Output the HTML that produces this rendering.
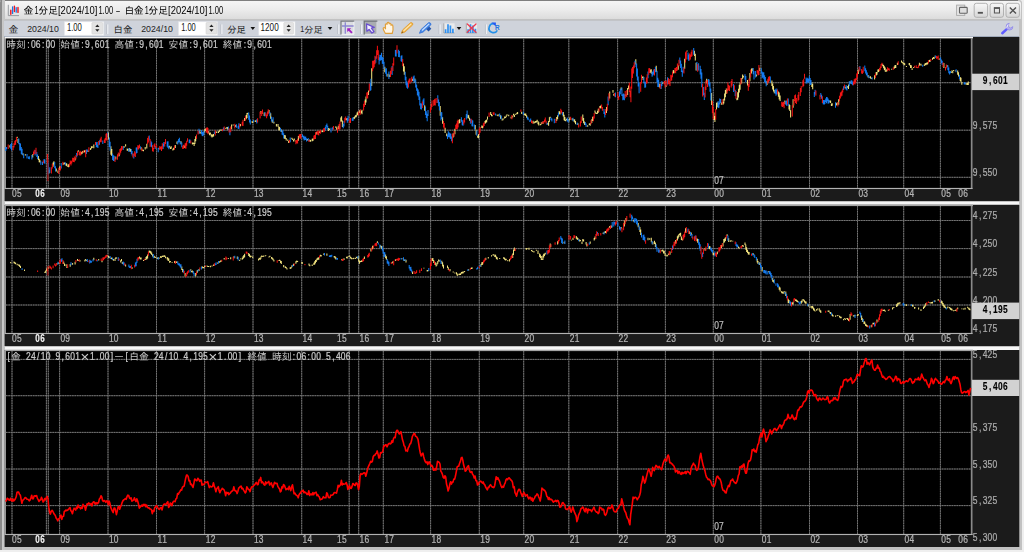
<!DOCTYPE html>
<html lang="ja"><head><meta charset="utf-8"><title>金1分足[2024/10]1.00 - 白金1分足[2024/10]1.00</title>
<style>
html,body{margin:0;padding:0}
body{width:1024px;height:552px;overflow:hidden;position:relative;background:#efefef;font-family:"Liberation Sans","IPAGothic",sans-serif}
svg text{font-family:"Liberation Sans","IPAGothic",sans-serif;white-space:pre}
svg text.j{font-family:"Liberation Mono","IPAGothic",monospace}
svg text.u{font-family:"Liberation Sans","IPAGothic",sans-serif}
#win{position:absolute;left:0;top:0;width:1022.4px;height:549.6px;background:#c2c2c2;border-radius:3px 3px 0 0}
#frameL{position:absolute;left:0;top:0;width:4.6px;height:549.7px;background:linear-gradient(to right,#8a8a8a 0,#8a8a8a 1.8px,#c9c9c9 1.8px,#c4c4c4 100%);border-radius:3px 0 0 0}
#titlebar{position:absolute;left:1.8px;top:1.3px;width:1019.4px;height:18.2px;background:linear-gradient(to bottom,#f5f5f5,#ebebeb 50%,#dcdcdc);border-radius:2px 3px 0 0}
#topedge{position:absolute;left:0;top:0;width:1018.2px;height:1.3px;background:#7e7e7e;border-radius:2px 0 0 0}
#toolbar{position:absolute;left:4.2px;top:19.5px;width:1015.1px;height:17.4px;background:#cfd3db;border-top:0.9px solid #c2c4c8;border-bottom:1px solid #9fa9b9;box-sizing:border-box}
.sepw{position:absolute;left:4.6px;width:1014.7px;background:#f6f6f6}
</style></head><body>
<div id="win"></div>
<div id="topedge"></div>
<div id="titlebar"></div>
<div id="frameL"></div>
<div id="toolbar"></div>
<div class="sepw" style="top:201.9px;height:2.6px"></div>
<div class="sepw" style="top:346.9px;height:2.7px"></div>
<svg width="1024" height="552" viewBox="0 0 1024 552" style="position:absolute;left:0;top:0">
<defs><linearGradient id="bg1" x1="0" y1="0" x2="0" y2="1"><stop offset="0" stop-color="#f8f8f8"/><stop offset="1" stop-color="#d6d6d6"/></linearGradient><filter id="bl" x="-2%" y="-2%" width="104%" height="104%"><feGaussianBlur stdDeviation="0.32"/></filter><filter id="bt" x="-2%" y="-10%" width="104%" height="120%"><feGaussianBlur stdDeviation="0.28"/></filter></defs>
<rect x="4.6" y="37" width="1014.6999999999999" height="164" fill="#1b1b1b"/>
<rect x="4.6" y="38" width="1.3000000000000007" height="150.5" fill="#b6b6b6"/>
<rect x="5.9" y="38" width="965.1" height="150.5" fill="#000"/>
<rect x="4.6" y="36.8" width="968.4" height="1.6" fill="#f4f4f4"/>
<g filter="url(#bl)"><path d="M12 38V188.5M46.4 38V188.5M48.3 38V188.5M59.6 38V188.5M108 38V188.5M156.5 38V188.5M204.6 38V188.5M253 38V188.5M301.7 38V188.5M349.2 38V188.5M358.7 38V188.5M383.3 38V188.5M430.6 38V188.5M479.3 38V188.5M523.7 38V188.5M568.8 38V188.5M617.6 38V188.5M665.4 38V188.5M713.3 38V188.5M760.9 38V188.5M809.5 38V188.5M857.5 38V188.5M903.7 38V188.5M940.4 38V188.5M5.9 82.7H971.0M5.9 130.2H971.0M5.9 177.3H971.0" stroke="#393939" stroke-width="0.95" fill="none"/><path d="M12 38V188.5M46.4 38V188.5M48.3 38V188.5M59.6 38V188.5M108 38V188.5M156.5 38V188.5M204.6 38V188.5M253 38V188.5M301.7 38V188.5M349.2 38V188.5M358.7 38V188.5M383.3 38V188.5M430.6 38V188.5M479.3 38V188.5M523.7 38V188.5M568.8 38V188.5M617.6 38V188.5M665.4 38V188.5M713.3 38V188.5M760.9 38V188.5M809.5 38V188.5M857.5 38V188.5M903.7 38V188.5M940.4 38V188.5M5.9 82.7H971.0M5.9 130.2H971.0M5.9 177.3H971.0" stroke="#787878" stroke-width="0.95" stroke-dasharray="1.63 0.82" fill="none"/></g>
<rect x="970.8" y="38" width="1.7" height="151.0" fill="#8a8a8a"/>
<rect x="4.6" y="187.9" width="967.9" height="1.15" fill="#b2b2b2"/>
<g fill="none" stroke-width="1.05" filter="url(#bl)">
<path d="M9.9 145.3V147.4M17.2 136.8V138.0M18.0 138.7V143.1M22.9 153.3V155.2M25.4 154.2V155.4M32.7 154.2V157.4M38.4 156.0V159.9M39.2 158.7V162.3M40.0 160.3V162.5M49.0 169.8V173.5M53.1 162.5V166.7M53.9 161.2V164.5M56.3 168.5V171.6M58.0 170.4V172.9M59.6 166.5V170.0M63.7 162.7V164.7M64.5 162.6V164.2M66.1 163.0V165.7M66.9 163.7V166.3M67.7 165.8V166.8M68.6 164.3V167.2M75.1 157.5V160.5M78.3 150.2V151.8M81.6 151.9V154.3M82.4 150.9V153.6M84.0 150.8V152.6M84.9 149.9V152.3M88.1 150.4V152.1M90.6 148.0V150.0M91.4 146.3V148.4M92.2 146.3V147.9M93.8 144.5V148.2M108.5 132.5V139.6M110.9 146.3V154.7M111.8 149.1V155.9M115.8 156.6V159.6M119.1 153.2V156.3M124.0 145.9V148.1M125.6 144.2V146.6M127.2 148.4V150.7M128.1 148.9V150.8M129.7 148.1V151.5M130.5 149.0V151.7M141.1 147.2V149.8M142.7 149.5V151.0M143.5 149.7V151.2M145.2 146.9V149.6M146.8 143.7V148.4M159.0 147.8V149.0M169.6 145.8V147.5M170.4 147.3V149.0M171.2 146.2V148.7M172.9 148.8V150.6M173.7 147.7V149.8M175.3 145.1V148.0M177.0 141.5V144.1M181.0 141.3V144.3M184.3 145.5V148.1M192.4 142.5V144.4M193.3 142.6V144.0M194.1 143.0V145.9M194.9 138.9V144.0M195.7 136.3V141.2M199.8 130.2V133.6M200.6 132.3V133.6M204.7 129.3V132.5M205.5 128.6V131.0M208.7 130.9V133.4M209.6 132.7V135.2M210.4 132.5V134.6M211.2 134.1V136.6M212.0 134.9V137.5M212.8 134.2V136.8M213.6 134.0V136.5M216.1 131.5V133.1M216.9 131.6V132.8M218.5 131.2V132.9M219.3 129.8V132.1M221.0 129.3V130.9M225.9 127.8V128.9M226.7 127.3V128.3M227.5 127.1V129.4M231.6 124.4V129.2M233.2 124.4V125.5M235.6 125.1V127.1M240.5 124.0V126.2M244.6 118.1V120.9M246.2 115.1V119.3M247.0 113.1V118.1M247.9 112.7V114.2M251.9 121.5V122.6M252.7 121.2V123.0M255.2 120.5V121.7M256.0 120.3V121.9M260.9 111.0V114.1M264.2 112.6V116.0M269.0 109.9V113.3M270.7 113.3V118.8M272.3 119.5V122.7M273.9 121.8V123.5M276.4 124.1V126.6M278.0 123.9V126.7M278.8 126.4V130.3M279.6 127.1V130.6M281.3 129.6V132.1M284.5 135.1V138.7M285.3 135.3V138.8M286.2 137.9V140.5M287.8 139.5V141.1M288.6 141.0V143.1M291.9 137.8V139.2M292.7 138.8V140.1M293.5 139.7V141.5M294.3 138.6V140.2M295.1 140.4V141.6M298.4 136.1V140.7M307.4 139.0V140.5M309.8 139.4V141.5M310.6 139.9V141.7M312.2 138.8V141.3M313.1 138.3V140.8M316.3 132.1V134.5M319.6 131.3V132.9M322.0 130.4V132.2M322.8 130.4V131.9M328.5 127.9V131.0M329.4 128.4V129.9M335.9 126.2V128.0M336.7 127.6V129.8M338.3 125.7V129.0M340.8 117.4V121.8M341.6 116.2V121.6M342.4 120.6V127.0M346.5 118.3V120.3M353.8 116.9V119.2M354.6 116.5V118.8M355.4 115.3V117.4M356.3 114.7V117.2M357.1 112.6V115.6M357.9 111.4V114.9M359.5 110.2V112.9M361.1 110.8V113.2M362.0 109.7V114.3M365.2 99.5V105.1M366.0 96.4V102.4M368.5 90.4V95.0M371.7 68.3V85.9M384.8 66.7V72.2M388.0 73.8V76.7M389.7 74.5V77.0M403.5 63.5V71.6M404.3 66.2V74.7M412.5 78.8V81.0M414.9 78.5V82.9M424.7 105.2V110.7M440.2 105.9V115.8M442.6 117.2V123.8M445.1 127.7V133.0M446.7 133.6V136.3M453.2 133.2V137.4M454.9 128.8V134.2M458.9 120.0V123.8M459.8 119.1V122.9M467.9 114.7V118.3M468.7 115.2V118.6M469.5 117.7V120.8M475.2 125.0V129.5M476.1 129.7V134.8M477.7 135.6V137.7M478.5 133.9V138.3M481.8 125.5V128.0M482.6 125.7V128.3M485.0 120.9V124.1M485.8 119.9V123.0M486.7 119.4V122.3M487.5 116.5V119.6M490.7 112.0V115.0M491.5 114.0V116.3M492.4 115.2V116.2M497.2 114.5V115.8M498.1 115.2V116.3M498.9 114.2V115.3M500.5 115.2V118.8M502.1 119.6V120.6M503.0 118.2V120.3M504.6 116.5V118.6M505.4 116.7V118.1M506.2 115.5V117.2M507.0 114.2V115.8M508.7 114.8V116.3M511.1 116.8V118.6M512.7 115.8V117.4M513.5 113.8V115.6M514.4 115.1V117.0M515.2 113.7V115.1M516.8 112.8V114.5M517.6 112.1V114.0M521.7 111.7V113.9M524.1 113.4V115.1M525.0 113.5V115.6M525.8 113.5V116.0M526.6 115.3V117.8M533.1 120.8V122.9M533.9 122.8V123.7M534.7 121.4V123.0M535.6 121.1V122.8M536.4 120.7V122.4M537.2 119.7V121.5M538.0 120.9V124.2M538.8 122.3V125.5M540.4 124.1V125.2M541.3 122.2V124.5M542.9 121.4V123.9M547.8 123.1V124.5M548.6 121.1V125.8M549.4 117.2V122.0M550.2 116.7V117.9M556.7 117.1V120.9M557.6 115.3V119.2M559.2 111.1V114.3M560.0 111.7V114.6M563.3 112.1V116.6M564.1 114.7V120.3M564.9 117.1V120.9M565.7 119.7V121.3M566.5 118.7V120.2M569.0 119.1V121.4M569.8 117.4V119.8M572.2 118.2V120.2M573.9 119.1V121.4M574.7 119.4V122.4M575.5 121.0V124.2M577.9 123.3V125.1M582.8 114.6V120.8M583.6 118.1V123.3M584.5 121.6V124.9M587.7 125.2V126.8M589.3 123.4V125.1M590.2 123.0V125.8M591.8 119.3V122.9M592.6 116.8V120.9M595.0 110.4V112.7M595.9 112.3V114.1M596.7 112.9V114.0M597.5 110.8V113.8M598.3 108.8V112.7M599.9 105.9V107.9M600.8 105.5V108.6M606.5 107.1V113.1M609.7 91.4V98.4M613.0 90.0V92.8M613.8 93.7V95.8M621.1 87.5V90.2M626.0 94.3V96.2M627.6 87.9V95.1M628.5 85.5V89.3M635.8 59.3V64.5M642.3 76.5V77.9M643.1 76.4V79.9M650.5 69.6V72.8M651.3 69.3V73.8M656.2 65.8V72.0M659.4 83.8V87.6M662.7 82.2V84.0M666.0 85.3V87.0M673.3 69.9V73.4M674.1 70.4V73.2M678.2 65.2V69.7M684.7 58.8V68.8M687.1 50.5V51.6M694.5 50.7V56.1M695.3 53.8V60.6M696.1 62.8V70.5M706.7 78.8V83.6M711.6 92.9V104.9M714.0 112.4V120.1M714.9 116.1V122.0M716.5 102.8V109.4M717.3 102.3V107.1M721.4 102.5V104.8M723.0 102.0V104.7M723.8 98.8V103.5M724.6 93.4V100.6M725.4 90.1V97.2M726.3 88.4V93.8M736.9 97.9V100.2M737.7 92.2V99.8M738.5 88.8V97.5M739.3 84.7V92.5M740.1 82.7V89.8M741.7 77.9V83.5M742.6 74.6V78.7M743.4 75.8V77.5M747.5 80.0V85.6M749.9 73.0V81.2M751.5 68.5V73.5M752.3 68.2V71.3M756.4 74.5V76.6M759.7 67.8V70.9M767.0 80.8V85.0M771.9 80.5V86.1M772.7 83.4V89.6M773.5 86.1V91.6M774.3 90.1V93.3M778.4 91.4V96.7M779.2 92.5V99.5M780.1 95.5V101.0M784.9 100.5V103.9M789.0 104.0V109.5M789.8 104.9V111.1M790.6 110.3V117.5M793.1 99.2V107.7M811.8 82.6V87.0M812.7 83.8V89.3M829.8 100.5V102.3M830.6 100.6V103.0M831.4 103.4V105.9M832.2 103.2V105.7M836.3 103.3V105.5M837.1 102.6V104.8M838.7 99.3V104.8M845.3 86.8V88.5M847.7 86.1V87.9M848.5 84.5V89.0M850.1 81.5V83.6M858.3 69.4V74.0M868.1 75.1V77.5M869.7 76.7V77.7M870.5 76.3V78.4M871.3 77.7V79.0M874.6 75.3V79.5M876.2 72.1V75.6M877.0 72.1V74.8M877.9 69.6V72.3M878.7 69.3V72.1M882.7 63.8V66.3M883.6 65.1V68.2M884.4 66.3V70.1M885.2 67.4V71.6M886.0 70.4V71.9M886.8 69.3V71.3M891.7 68.7V69.7M894.2 66.4V68.7M895.0 65.1V68.1M895.8 65.0V68.0M897.4 62.7V65.0M901.5 60.5V62.4M902.3 61.8V63.0M903.1 62.4V64.2M903.9 62.7V64.7M904.7 63.2V65.2M906.4 66.0V66.9M908.8 63.6V64.4M909.6 62.9V65.5M910.5 64.9V67.9M911.3 65.3V68.1M912.1 68.3V70.0M913.7 67.0V68.0M917.0 67.1V67.9M919.4 62.8V65.7M920.2 63.7V64.6M921.0 63.7V65.7M924.3 64.4V66.1M925.1 63.2V65.3M925.9 63.1V65.2M926.8 62.4V64.5M927.6 62.3V64.4M929.2 60.0V61.7M930.0 59.7V61.9M932.5 57.9V59.8M933.3 57.0V58.7M934.1 56.9V58.9M934.9 55.8V56.6M939.8 58.5V59.8M943.9 63.0V67.9M947.1 65.1V67.0M951.2 71.9V73.0M952.0 70.3V72.3M952.8 71.2V73.2M953.6 69.9V71.1M955.3 70.5V71.3M957.7 70.6V74.8M958.5 72.2V76.6M960.2 76.9V81.1M961.0 77.7V81.9M961.8 81.9V84.7M965.9 83.0V84.5M966.7 83.6V84.8M967.5 83.1V85.1M968.3 81.6V84.9" stroke="#efe07c"/>
<path d="M5.8 147.2V151.1M6.6 147.0V149.3M10.7 144.0V148.8M11.5 142.7V150.5M18.8 138.5V144.2M19.7 142.9V150.4M20.5 143.4V150.4M21.3 147.1V153.9M22.1 148.8V154.9M23.7 153.7V158.2M27.0 154.0V158.5M28.6 156.4V159.1M29.4 156.2V159.3M31.9 154.9V159.5M35.1 150.1V155.4M36.8 152.1V156.9M37.6 154.6V158.9M40.8 161.3V164.8M42.5 161.7V165.0M44.1 159.0V163.2M44.9 159.5V163.7M48.2 162.6V174.5M49.8 167.3V172.9M54.7 162.1V168.3M55.5 166.2V171.6M61.2 162.9V168.6M65.3 162.3V165.3M76.7 153.1V157.3M86.5 149.4V153.9M87.3 149.5V152.1M96.3 142.2V147.2M97.1 142.0V147.2M97.9 144.8V148.1M99.5 140.3V144.7M102.8 140.4V144.1M107.7 132.2V137.1M109.3 137.5V146.9M110.1 141.8V150.8M112.6 153.6V160.0M113.4 155.2V161.0M114.2 155.7V160.9M123.2 146.4V149.9M128.9 147.9V151.9M131.3 148.9V154.1M132.1 151.0V155.6M133.8 153.8V158.6M136.2 147.4V153.6M137.0 147.3V153.1M140.3 146.2V149.1M149.2 135.6V140.5M150.9 140.7V146.5M151.7 142.2V147.3M155.8 145.9V148.9M158.2 148.0V152.2M163.1 143.7V149.1M163.9 142.0V146.5M167.2 141.6V146.7M168.0 141.3V148.0M168.8 145.9V149.3M177.8 140.8V144.4M178.6 139.1V142.5M179.4 137.7V142.3M180.2 141.2V144.2M181.8 142.6V147.3M189.2 139.5V143.2M190.0 139.6V143.0M199.0 128.7V133.8M201.4 130.1V134.2M202.2 131.6V136.0M203.0 132.0V136.3M203.8 130.7V135.1M214.4 131.4V134.1M223.4 127.4V130.8M228.3 126.5V130.3M229.9 129.7V135.2M236.4 124.3V127.7M238.1 125.8V128.7M238.9 123.2V129.0M248.7 112.6V119.8M249.5 115.6V122.5M250.3 119.4V124.5M253.6 120.0V122.1M256.8 119.3V123.6M265.0 111.9V116.5M269.9 111.9V116.2M271.5 116.8V121.5M273.1 117.3V122.6M280.5 128.0V131.5M282.1 129.8V134.7M282.9 130.8V135.2M283.7 133.2V138.5M290.2 137.5V142.2M302.5 134.3V137.0M303.3 135.8V138.7M304.1 135.8V140.5M304.9 137.0V140.1M305.7 136.4V140.1M306.5 138.2V141.4M308.2 137.9V141.1M325.3 126.7V130.6M326.1 125.0V128.8M326.9 123.5V126.7M327.7 125.7V130.1M331.0 127.8V132.6M332.6 127.2V129.8M343.2 123.9V128.2M344.0 121.1V126.6M347.3 118.0V122.7M348.1 115.7V120.9M352.2 118.2V120.7M353.0 117.2V120.9M370.1 82.7V90.9M370.9 78.7V90.3M375.8 56.4V62.7M379.1 57.3V64.4M379.9 54.8V60.8M380.7 55.1V60.4M381.5 52.7V60.0M382.3 56.9V63.8M383.1 57.4V64.3M384.0 61.8V68.8M385.6 68.4V73.7M386.4 68.3V76.4M388.9 71.6V79.0M392.1 66.1V74.9M395.4 50.1V56.5M396.2 49.8V56.4M398.6 49.7V56.9M399.4 51.1V57.3M401.1 55.7V61.3M401.9 55.2V62.1M405.2 71.7V80.2M406.0 76.7V85.2M406.8 81.3V87.8M407.6 82.7V88.7M413.3 76.4V81.0M414.1 75.5V82.7M415.7 79.6V87.4M416.6 84.4V90.7M417.4 88.3V95.3M418.2 89.5V96.4M419.0 91.8V99.9M419.8 96.4V105.6M420.6 103.2V109.3M421.5 103.5V109.6M423.1 99.4V105.6M423.9 98.2V105.1M425.5 106.6V115.0M426.3 111.3V118.0M427.2 113.8V121.3M428.0 110.0V116.0M437.8 95.3V103.1M438.6 99.6V106.2M439.4 102.1V110.4M441.0 112.1V120.4M441.8 112.3V119.1M447.5 134.5V139.0M448.3 131.3V137.3M449.2 132.5V136.9M450.0 133.3V138.6M450.8 133.7V139.0M451.6 136.4V141.2M461.4 117.2V121.7M462.2 120.1V125.3M463.0 121.4V125.8M466.3 114.1V119.4M467.1 110.5V117.8M470.4 118.8V123.8M472.0 119.7V126.3M472.8 120.5V126.5M474.4 124.5V129.6M476.9 130.4V135.7M495.6 113.4V115.5M499.7 113.5V116.8M501.3 115.5V119.4M523.3 111.7V114.7M527.4 116.5V119.5M528.2 117.6V120.3M529.8 119.6V122.1M530.7 118.5V121.5M547.0 122.4V124.9M551.0 117.4V120.3M551.9 118.5V121.6M554.3 118.7V123.2M558.4 112.6V116.5M562.4 112.0V115.2M567.3 117.5V121.4M568.2 119.0V122.4M573.0 117.8V121.3M577.1 122.5V125.0M585.3 122.0V124.9M586.1 123.5V127.1M604.0 109.1V113.9M604.8 111.8V117.6M608.1 96.6V105.3M615.4 92.4V97.3M619.5 91.3V96.7M620.3 88.9V94.2M621.9 87.5V96.0M622.8 94.3V100.3M623.6 93.5V99.8M624.4 94.3V100.3M635.0 60.8V67.1M636.6 63.4V76.5M637.4 68.6V80.4M638.2 76.5V86.4M639.1 82.9V93.3M643.9 77.0V83.3M644.8 81.7V87.7M645.6 81.7V87.5M648.0 71.6V78.2M652.1 71.7V76.8M652.9 71.6V75.5M653.7 69.6V74.6M655.4 66.9V72.3M657.0 70.8V82.2M657.8 77.7V86.9M658.6 79.8V86.9M661.1 83.8V89.1M661.9 81.1V86.0M667.6 77.2V84.4M679.8 57.6V63.5M680.6 60.6V68.1M681.4 63.8V71.9M682.3 70.5V76.7M683.1 66.7V72.5M688.0 52.5V59.4M688.8 54.5V61.0M693.7 48.1V54.7M696.9 61.9V70.4M698.6 63.3V70.5M700.2 65.8V74.6M701.0 68.9V78.7M701.8 72.4V87.3M703.4 87.0V95.2M704.3 92.7V100.0M708.3 79.1V84.5M709.1 79.5V86.4M710.0 82.4V91.7M710.8 88.6V100.4M718.1 101.1V108.1M718.9 102.5V107.7M719.7 98.4V104.6M720.6 99.1V102.9M733.6 84.0V91.9M735.2 89.7V96.0M745.0 74.3V79.7M745.8 76.0V82.3M753.2 67.9V74.3M754.0 71.1V79.4M755.6 71.1V77.5M761.3 68.3V73.5M762.1 71.6V78.2M762.9 72.3V77.4M763.8 72.3V79.2M764.6 75.2V82.0M765.4 76.9V83.3M766.2 81.5V86.3M770.3 76.4V82.7M775.2 88.8V93.8M776.0 90.0V95.7M776.8 88.5V94.5M785.8 101.1V104.8M786.6 100.5V105.7M788.2 98.6V106.1M806.1 77.6V83.4M806.9 78.6V83.4M807.8 77.8V81.9M808.6 78.8V83.0M809.4 75.8V81.3M810.2 78.1V85.0M811.0 80.1V84.7M814.3 91.9V97.0M815.1 89.7V94.6M820.8 93.1V96.9M821.6 94.8V98.8M823.2 100.1V104.2M824.1 99.9V104.7M824.9 100.3V103.9M825.7 98.4V102.0M826.5 97.0V103.2M827.3 97.3V101.3M828.1 98.4V103.8M829.0 100.0V103.2M835.5 102.2V107.7M843.6 86.2V90.1M846.1 84.9V89.8M846.9 86.6V90.5M849.3 81.3V86.3M851.0 80.6V84.0M851.8 80.2V84.2M852.6 81.4V85.2M859.9 66.0V70.4M864.8 65.6V71.2M865.6 68.3V73.5M866.4 70.2V75.2M867.3 72.6V76.6M868.9 75.5V78.2M872.1 77.3V79.6M922.7 64.7V66.8M935.7 55.4V58.0M940.6 57.3V60.1M941.4 59.5V63.2M942.2 60.7V64.9M947.9 65.3V70.3M948.8 67.6V73.2M949.6 71.3V74.5M950.4 71.0V73.3M956.1 69.3V72.3M959.4 74.8V79.2M964.2 82.3V84.6M965.1 82.3V84.6" stroke="#1279ec"/>
<path d="M8.2 144.6V149.0M13.1 145.9V150.2M14.0 143.3V147.6M14.8 140.8V145.1M15.6 139.9V144.8M16.4 136.9V141.5M33.5 151.4V154.9M34.3 149.7V154.1M36.0 147.7V154.3M43.3 160.4V163.2M47.4 153.9V163.2M51.4 167.2V173.5M52.3 163.8V168.4M58.8 167.8V174.1M60.4 166.1V170.5M62.9 161.8V165.3M69.4 163.5V167.0M70.2 160.6V164.1M71.0 161.2V165.4M71.8 160.5V163.6M72.6 157.7V161.6M73.4 157.9V162.0M74.3 156.5V162.3M75.9 155.2V159.4M77.5 150.9V155.7M79.2 152.0V155.1M80.0 150.8V155.7M80.8 151.4V155.3M83.2 150.6V152.9M85.7 149.7V157.3M88.9 147.2V151.8M95.5 141.9V145.1M98.7 141.1V145.3M100.3 138.5V142.3M101.2 136.7V142.2M104.4 139.6V142.9M105.2 137.9V143.1M106.0 133.7V140.0M106.9 133.1V140.8M115.0 157.2V162.0M117.5 154.3V159.7M118.3 152.6V156.4M119.9 149.1V154.7M120.7 148.2V152.8M121.5 146.0V150.7M122.3 146.2V149.6M132.9 153.2V157.4M134.6 151.3V156.3M135.4 152.5V156.9M137.8 145.3V149.4M138.6 145.5V149.4M139.5 144.6V147.9M141.9 147.8V151.3M147.6 138.0V144.2M148.4 136.2V142.6M150.1 138.9V146.9M152.5 145.3V151.2M153.3 148.0V151.8M154.1 144.3V148.9M154.9 143.2V146.9M156.6 144.9V148.0M159.8 146.0V149.9M160.7 146.7V149.3M161.5 146.2V150.9M162.3 143.3V149.3M164.7 142.1V146.5M165.5 139.1V144.0M174.5 145.4V149.7M182.7 145.8V149.1M183.5 144.7V148.7M185.1 143.2V148.3M185.9 142.8V148.7M186.7 140.8V145.7M187.5 138.3V141.8M190.8 140.5V143.6M196.5 134.4V138.9M198.1 130.8V134.4M206.3 128.1V132.6M207.1 127.1V133.1M207.9 128.0V134.3M215.3 130.2V135.6M222.6 128.9V131.2M224.2 126.5V130.1M229.1 128.2V132.5M230.7 126.4V132.2M234.8 123.7V128.5M239.7 123.8V127.5M242.2 121.7V125.8M243.0 119.8V126.0M245.4 116.0V120.7M257.6 118.3V122.5M260.1 111.7V118.5M261.7 111.0V116.1M262.5 109.5V114.0M265.8 112.8V115.8M266.6 114.5V118.2M267.4 111.5V116.3M268.2 109.2V114.2M289.4 140.1V142.7M295.9 140.2V144.3M296.8 139.9V143.2M297.6 138.8V143.4M299.2 134.4V137.8M300.0 133.9V138.8M300.8 133.9V138.7M309.0 139.8V142.1M313.9 135.6V139.8M314.7 135.0V138.9M315.5 132.3V139.0M317.1 131.1V134.3M317.9 131.4V135.1M318.8 130.6V135.4M320.4 129.8V133.7M323.7 128.2V132.2M324.5 128.0V131.8M333.4 126.0V129.7M337.5 127.5V132.7M339.1 123.9V130.3M340.0 121.6V129.3M344.8 117.7V122.8M345.7 116.4V120.3M349.7 118.4V122.9M350.5 118.0V123.1M358.7 111.5V115.6M360.3 109.3V114.7M363.6 103.8V110.6M364.4 101.1V107.0M366.8 92.4V98.4M367.7 92.1V98.5M369.3 83.6V91.6M372.6 60.7V71.3M373.4 60.9V68.6M374.2 60.1V67.3M375.0 55.7V64.2M376.6 50.2V58.8M377.4 45.7V55.0M378.3 50.3V60.1M390.5 70.7V77.1M391.3 67.5V74.1M392.9 63.3V71.0M393.7 57.6V65.4M397.0 45.2V53.4M402.7 58.9V66.3M408.4 80.5V87.6M409.2 78.7V82.5M410.0 78.3V83.7M411.7 76.7V82.1M422.3 101.4V108.1M430.4 107.3V112.4M431.2 103.8V109.7M432.0 100.4V107.1M433.7 100.1V105.7M434.5 99.3V105.2M435.3 98.5V105.5M436.9 98.0V103.0M443.5 121.0V127.4M444.3 122.9V129.2M452.4 133.8V143.2M454.1 131.0V136.8M455.7 124.8V129.8M456.5 123.4V128.9M457.3 120.8V129.2M458.1 119.6V127.5M463.8 119.5V124.6M464.6 118.1V122.5M471.2 118.8V122.9M479.3 128.6V134.8M480.1 127.0V132.7M483.4 123.3V127.4M484.2 122.3V126.1M489.1 112.6V117.1M493.2 112.3V114.8M494.0 112.2V114.9M511.9 115.1V119.2M520.9 109.6V111.7M531.5 120.3V123.0M532.3 121.4V123.7M542.1 121.7V124.0M543.7 120.9V123.4M544.5 119.6V122.3M545.3 117.6V121.4M546.1 120.8V123.4M555.9 118.7V123.0M560.8 108.7V112.5M561.6 110.2V113.4M570.6 116.8V119.9M578.7 124.5V127.5M580.4 121.3V126.6M581.2 116.4V123.1M591.0 120.3V124.3M593.4 116.2V121.3M594.2 112.9V118.4M599.1 107.8V111.8M601.6 104.4V108.2M602.4 107.0V110.8M605.6 109.1V114.9M607.3 103.7V110.8M608.9 93.3V100.8M614.6 93.1V96.4M617.9 92.1V97.9M618.7 95.9V100.0M625.2 90.9V98.2M626.8 90.0V97.0M629.3 82.7V91.9M630.1 90.8V97.3M630.9 86.5V102.3M631.7 68.5V88.8M632.5 67.1V78.1M633.4 65.5V73.5M634.2 62.2V68.2M640.7 82.1V91.8M641.5 74.7V83.4M646.4 77.6V83.7M647.2 74.2V83.3M648.8 68.3V74.8M649.7 68.0V73.1M654.5 69.0V75.5M660.2 83.8V89.0M664.3 80.8V84.5M665.1 81.1V87.6M666.8 80.2V85.9M668.4 77.9V84.2M669.2 78.9V84.3M670.0 80.8V85.9M670.8 74.7V81.0M671.7 75.3V80.6M672.5 71.6V77.2M674.9 68.1V72.7M675.7 67.8V73.3M676.5 67.1V70.9M677.4 63.5V70.4M679.0 59.8V66.3M683.9 67.4V73.6M685.5 52.3V62.6M686.3 51.0V59.4M689.6 53.5V60.3M690.4 54.4V59.6M691.2 51.8V57.0M692.0 49.7V56.2M697.7 64.2V71.7M702.6 83.7V96.4M705.1 86.6V97.5M705.9 80.4V90.1M707.5 79.9V87.0M712.4 101.1V113.2M713.2 106.7V119.3M715.7 109.1V119.7M722.2 99.2V104.2M727.1 88.5V93.4M727.9 82.4V91.1M728.7 85.1V90.1M729.5 85.7V90.9M731.2 81.1V87.4M732.0 79.0V85.8M734.4 85.2V90.9M736.0 91.0V98.8M740.9 78.1V84.5M748.3 84.1V90.7M749.1 78.4V87.0M750.7 69.4V77.2M757.2 69.9V73.6M758.0 70.7V75.6M758.9 65.1V74.9M767.8 78.8V83.8M768.6 76.7V82.2M769.5 76.3V80.8M777.6 89.4V94.2M781.7 101.8V106.6M782.5 102.6V107.0M783.3 101.8V106.4M784.1 102.0V108.2M787.4 98.5V104.5M792.3 105.2V116.4M793.9 99.9V105.5M794.7 95.2V100.9M795.5 94.6V102.9M796.4 97.9V103.9M798.0 94.8V101.6M798.8 92.1V99.9M800.4 88.0V96.1M801.2 86.0V92.2M802.9 80.2V87.3M803.7 78.8V86.1M804.5 73.8V78.7M815.9 90.6V95.7M820.0 94.7V99.6M822.4 96.2V102.9M837.9 102.1V106.4M839.5 95.7V101.2M840.4 92.6V98.6M841.2 91.7V96.5M842.0 90.6V95.8M842.8 88.4V92.5M844.4 84.5V88.2M853.4 81.5V85.3M854.2 79.2V83.8M855.0 78.5V84.5M855.8 78.3V82.6M856.7 73.6V80.1M857.5 71.2V77.6M859.1 66.7V71.4M861.6 68.9V73.5M862.4 70.5V73.9M863.2 66.8V72.7M875.4 73.5V78.1M879.5 68.0V70.9M880.3 66.6V70.3M881.1 64.0V68.1M881.9 62.8V65.3M887.6 67.2V71.3M888.4 68.2V70.1M889.3 68.4V70.7M893.3 67.3V69.7M898.2 61.2V64.7M914.5 65.8V67.4M916.2 65.2V68.1M917.8 66.7V68.3M918.6 64.8V67.8M928.4 60.3V63.6M930.8 59.1V61.1M936.5 55.9V58.8M937.3 56.5V58.4M938.2 55.5V59.9M943.1 62.6V67.1M945.5 67.0V70.6M946.3 64.6V68.3" stroke="#f01212"/>
<path d="M47.9 159V181" stroke="#b00808"/>
</g>
<g filter="url(#bt)">
<text transform="translate(12.00 196.90) scale(0.81 1)" x="0.15 6.22" y="0" font-size="10.4" fill="#b4b4b4" stroke="#b4b4b4" stroke-width="0.25">05</text>
<text transform="translate(35.16 196.90) scale(0.78 1)" x="0.26 6.57" y="0" font-size="10.4" fill="#f4f4f4" stroke="#f4f4f4" stroke-width="0.12" font-weight="bold">06</text>
<text transform="translate(60.30 196.90) scale(0.81 1)" x="0.15 6.22" y="0" font-size="10.4" fill="#b4b4b4" stroke="#b4b4b4" stroke-width="0.25">09</text>
<text transform="translate(108.80 196.90) scale(0.81 1)" x="0.15 6.22" y="0" font-size="10.4" fill="#b4b4b4" stroke="#b4b4b4" stroke-width="0.25">10</text>
<text transform="translate(157.30 196.90) scale(0.81 1)" x="0.15 6.22" y="0" font-size="10.4" fill="#b4b4b4" stroke="#b4b4b4" stroke-width="0.25">11</text>
<text transform="translate(205.60 196.90) scale(0.81 1)" x="0.15 6.22" y="0" font-size="10.4" fill="#b4b4b4" stroke="#b4b4b4" stroke-width="0.25">12</text>
<text transform="translate(253.80 196.90) scale(0.81 1)" x="0.15 6.22" y="0" font-size="10.4" fill="#b4b4b4" stroke="#b4b4b4" stroke-width="0.25">13</text>
<text transform="translate(302.50 196.90) scale(0.81 1)" x="0.15 6.22" y="0" font-size="10.4" fill="#b4b4b4" stroke="#b4b4b4" stroke-width="0.25">14</text>
<text transform="translate(336.96 196.90) scale(0.81 1)" x="0.15 6.22" y="0" font-size="10.4" fill="#b4b4b4" stroke="#b4b4b4" stroke-width="0.25">15</text>
<text transform="translate(359.50 196.90) scale(0.81 1)" x="0.15 6.22" y="0" font-size="10.4" fill="#b4b4b4" stroke="#b4b4b4" stroke-width="0.25">16</text>
<text transform="translate(384.30 196.90) scale(0.81 1)" x="0.15 6.22" y="0" font-size="10.4" fill="#b4b4b4" stroke="#b4b4b4" stroke-width="0.25">17</text>
<text transform="translate(431.50 196.90) scale(0.81 1)" x="0.15 6.22" y="0" font-size="10.4" fill="#b4b4b4" stroke="#b4b4b4" stroke-width="0.25">18</text>
<text transform="translate(480.10 196.90) scale(0.81 1)" x="0.15 6.22" y="0" font-size="10.4" fill="#b4b4b4" stroke="#b4b4b4" stroke-width="0.25">19</text>
<text transform="translate(524.50 196.90) scale(0.81 1)" x="0.15 6.22" y="0" font-size="10.4" fill="#b4b4b4" stroke="#b4b4b4" stroke-width="0.25">20</text>
<text transform="translate(569.60 196.90) scale(0.81 1)" x="0.15 6.22" y="0" font-size="10.4" fill="#b4b4b4" stroke="#b4b4b4" stroke-width="0.25">21</text>
<text transform="translate(618.40 196.90) scale(0.81 1)" x="0.15 6.22" y="0" font-size="10.4" fill="#b4b4b4" stroke="#b4b4b4" stroke-width="0.25">22</text>
<text transform="translate(666.20 196.90) scale(0.81 1)" x="0.15 6.22" y="0" font-size="10.4" fill="#b4b4b4" stroke="#b4b4b4" stroke-width="0.25">23</text>
<text transform="translate(714.10 196.90) scale(0.81 1)" x="0.15 6.22" y="0" font-size="10.4" fill="#b4b4b4" stroke="#b4b4b4" stroke-width="0.25">00</text>
<text transform="translate(761.70 196.90) scale(0.81 1)" x="0.15 6.22" y="0" font-size="10.4" fill="#b4b4b4" stroke="#b4b4b4" stroke-width="0.25">01</text>
<text transform="translate(810.30 196.90) scale(0.81 1)" x="0.15 6.22" y="0" font-size="10.4" fill="#b4b4b4" stroke="#b4b4b4" stroke-width="0.25">02</text>
<text transform="translate(858.30 196.90) scale(0.81 1)" x="0.15 6.22" y="0" font-size="10.4" fill="#b4b4b4" stroke="#b4b4b4" stroke-width="0.25">03</text>
<text transform="translate(904.50 196.90) scale(0.81 1)" x="0.15 6.22" y="0" font-size="10.4" fill="#b4b4b4" stroke="#b4b4b4" stroke-width="0.25">04</text>
<text transform="translate(941.20 196.90) scale(0.81 1)" x="0.15 6.22" y="0" font-size="10.4" fill="#b4b4b4" stroke="#b4b4b4" stroke-width="0.25">05</text>
<text transform="translate(958.16 196.90) scale(0.81 1)" x="0.15 6.22" y="0" font-size="10.4" fill="#b4b4b4" stroke="#b4b4b4" stroke-width="0.25">06</text>
<text transform="translate(714.10 184.30) scale(0.81 1)" x="0.12 6.19" y="0" font-size="10.5" fill="#bcbcbc" stroke="#bcbcbc" stroke-width="0.25">07</text>
<text transform="translate(972.70 128.90) scale(0.81 1)" x="0.12 7.65 12.27 18.34 24.41" y="0" font-size="10.5" fill="#acacac" stroke="#acacac" stroke-width="0.25">9,575</text>
<text transform="translate(972.70 176.00) scale(0.81 1)" x="0.12 7.65 12.27 18.34 24.41" y="0" font-size="10.5" fill="#acacac" stroke="#acacac" stroke-width="0.25">9,550</text>
<rect x="972.0" y="73.7" width="47.29999999999993" height="16.39999999999999" fill="#d2d2d2"/>
<text transform="translate(982.60 84.10) scale(0.84 1)" x="0.24 7.66 12.30 18.34 24.37" y="0" font-size="10.0" fill="#000" stroke="#000" stroke-width="0.12" font-weight="bold">9,601</text>
<text x="6.20" y="47.90" font-size="9.84" textLength="19.68" lengthAdjust="spacingAndGlyphs" fill="#cacaca" class="j">時刻</text><text transform="translate(25.88 48.30) scale(0.81 1)" x="1.58 6.19 12.27 19.80 24.41 30.49 38.02" y="0" font-size="10.5" fill="#cacaca" stroke="#cacaca" stroke-width="0.25">:06:00 </text><text x="60.32" y="47.90" font-size="9.84" textLength="19.68" lengthAdjust="spacingAndGlyphs" fill="#cacaca" class="j">始値</text><text transform="translate(80.00 48.30) scale(0.81 1)" x="1.58 6.19 13.73 18.34 24.41 30.49 38.02" y="0" font-size="10.5" fill="#cacaca" stroke="#cacaca" stroke-width="0.25">:9,601 </text><text x="114.44" y="47.90" font-size="9.84" textLength="19.68" lengthAdjust="spacingAndGlyphs" fill="#cacaca" class="j">高値</text><text transform="translate(134.12 48.30) scale(0.81 1)" x="1.58 6.19 13.73 18.34 24.41 30.49 38.02" y="0" font-size="10.5" fill="#cacaca" stroke="#cacaca" stroke-width="0.25">:9,601 </text><text x="168.56" y="47.90" font-size="9.84" textLength="19.68" lengthAdjust="spacingAndGlyphs" fill="#cacaca" class="j">安値</text><text transform="translate(188.24 48.30) scale(0.81 1)" x="1.58 6.19 13.73 18.34 24.41 30.49 38.02" y="0" font-size="10.5" fill="#cacaca" stroke="#cacaca" stroke-width="0.25">:9,601 </text><text x="222.68" y="47.90" font-size="9.84" textLength="19.68" lengthAdjust="spacingAndGlyphs" fill="#cacaca" class="j">終値</text><text transform="translate(242.36 48.30) scale(0.81 1)" x="1.58 6.19 13.73 18.34 24.41 30.49" y="0" font-size="10.5" fill="#cacaca" stroke="#cacaca" stroke-width="0.25">:9,601</text>
</g>
<rect x="4.6" y="205" width="1014.6999999999999" height="141" fill="#1b1b1b"/>
<rect x="4.6" y="206" width="1.3000000000000007" height="127.5" fill="#b6b6b6"/>
<rect x="5.9" y="206" width="965.1" height="127.5" fill="#000"/>
<rect x="4.6" y="204.7" width="968.4" height="1.4" fill="#a4a4a4"/>
<g filter="url(#bl)"><path d="M12 206V333.5M46.4 206V333.5M48.3 206V333.5M59.6 206V333.5M108 206V333.5M156.5 206V333.5M204.6 206V333.5M253 206V333.5M301.7 206V333.5M349.2 206V333.5M358.7 206V333.5M383.3 206V333.5M430.6 206V333.5M479.3 206V333.5M523.7 206V333.5M568.8 206V333.5M617.6 206V333.5M665.4 206V333.5M713.3 206V333.5M760.9 206V333.5M809.5 206V333.5M857.5 206V333.5M903.7 206V333.5M940.4 206V333.5M5.9 220.5H971.0M5.9 248.6H971.0M5.9 277H971.0M5.9 305H971.0" stroke="#393939" stroke-width="0.95" fill="none"/><path d="M12 206V333.5M46.4 206V333.5M48.3 206V333.5M59.6 206V333.5M108 206V333.5M156.5 206V333.5M204.6 206V333.5M253 206V333.5M301.7 206V333.5M349.2 206V333.5M358.7 206V333.5M383.3 206V333.5M430.6 206V333.5M479.3 206V333.5M523.7 206V333.5M568.8 206V333.5M617.6 206V333.5M665.4 206V333.5M713.3 206V333.5M760.9 206V333.5M809.5 206V333.5M857.5 206V333.5M903.7 206V333.5M940.4 206V333.5M5.9 220.5H971.0M5.9 248.6H971.0M5.9 277H971.0M5.9 305H971.0" stroke="#787878" stroke-width="0.95" stroke-dasharray="1.63 0.82" fill="none"/></g>
<rect x="970.8" y="206" width="1.7" height="128.0" fill="#8a8a8a"/>
<rect x="4.6" y="332.9" width="967.9" height="1.15" fill="#b2b2b2"/>
<g fill="none" stroke-width="1.05" filter="url(#bl)">
<path d="M10.7 262.1V263.3M14.0 261.6V263.2M14.8 262.1V263.7M15.6 262.7V264.3M17.2 263.7V265.3M18.8 264.3V266.1M19.7 264.8V267.0M20.5 265.9V268.1M24.5 269.6V271.1M44.9 271.7V273.1M45.7 270.4V272.8M46.6 268.6V271.3M48.2 266.7V269.1M57.1 263.3V264.4M58.8 262.4V263.9M63.7 261.4V264.1M64.5 263.6V266.0M66.1 264.3V266.2M66.9 266.5V268.1M70.2 264.1V266.8M72.6 262.9V264.8M75.1 261.8V264.6M77.5 258.9V260.7M78.3 259.9V261.1M80.0 260.3V261.6M84.9 259.7V261.4M85.7 259.1V260.4M86.5 260.2V260.9M93.8 257.8V260.3M98.7 259.0V260.5M102.0 260.5V262.2M107.7 255.3V256.5M108.5 256.1V257.8M109.3 256.5V258.1M110.9 257.7V258.8M111.8 257.6V259.3M113.4 259.0V260.8M115.0 258.5V261.0M115.8 257.3V259.0M116.6 257.4V258.6M120.7 260.3V262.4M121.5 259.1V261.2M122.3 261.9V264.0M125.6 264.5V266.4M132.1 267.2V268.8M139.5 256.6V258.5M140.3 257.6V259.6M141.1 257.6V259.4M143.5 260.1V260.9M145.2 258.9V260.1M146.0 257.1V259.6M146.8 256.1V259.6M147.6 254.6V258.4M149.2 250.4V252.6M150.1 250.8V253.0M150.9 251.2V254.1M151.7 252.4V255.0M152.5 254.2V256.5M154.1 255.8V257.2M154.9 256.6V258.0M155.8 257.0V257.8M157.4 257.4V258.9M159.0 257.4V258.9M160.7 256.0V257.9M161.5 256.5V257.8M162.3 255.8V256.9M163.1 255.5V257.1M163.9 255.4V256.5M164.7 255.3V257.1M165.5 256.4V258.3M167.2 256.9V259.5M168.0 257.8V260.8M168.8 258.5V261.0M169.6 261.0V262.8M170.4 261.1V262.2M172.1 262.3V263.0M174.5 260.9V262.9M176.1 261.2V263.1M177.0 261.8V262.8M181.8 266.5V270.0M182.7 269.1V272.3M185.1 272.9V276.4M190.8 269.3V270.7M191.6 270.9V272.2M192.4 270.6V272.6M195.7 272.9V276.4M197.3 270.1V272.8M199.0 269.0V271.1M202.2 266.3V267.8M203.0 267.1V268.5M203.8 266.9V267.9M204.7 266.1V266.9M207.1 265.4V266.4M207.9 265.9V266.9M208.7 266.0V267.0M210.4 265.8V267.2M212.0 265.6V266.4M213.6 264.4V266.0M217.7 262.4V263.7M219.3 261.3V262.8M220.1 261.3V262.3M221.0 259.9V262.1M224.2 258.0V259.4M228.3 257.9V258.9M230.7 257.3V259.2M234.0 256.3V258.2M237.3 256.5V259.0M239.7 259.7V260.9M240.5 258.4V259.2M242.2 257.8V259.8M243.0 256.2V258.9M243.8 255.0V258.0M244.6 253.8V257.2M248.7 253.0V255.9M249.5 253.9V256.7M250.3 255.6V257.5M251.1 255.7V257.1M252.7 256.6V258.0M258.5 258.8V260.4M259.3 257.8V259.4M260.1 257.9V260.1M260.9 256.5V258.7M261.7 255.4V257.1M262.5 256.0V256.7M263.3 255.5V256.9M265.0 255.6V256.4M265.8 255.2V255.9M269.0 256.6V257.4M269.9 255.8V257.1M271.5 257.1V258.8M272.3 257.5V259.4M273.1 258.4V260.3M273.9 259.8V261.4M278.8 260.1V260.7M279.6 259.8V261.0M280.5 260.5V263.0M281.3 261.1V264.1M283.7 264.9V267.2M285.3 266.3V268.1M286.2 267.1V268.6M287.0 268.2V269.4M290.2 267.3V268.9M291.1 266.9V268.6M291.9 265.2V267.3M293.5 263.8V265.9M295.9 261.3V263.8M296.8 260.6V262.3M297.6 261.1V261.9M301.6 262.2V263.6M302.5 262.2V263.7M309.0 263.6V265.4M309.8 264.8V266.2M312.2 264.6V266.1M313.9 262.8V265.1M314.7 261.2V264.6M315.5 260.0V263.2M316.3 259.4V261.9M317.1 258.3V260.3M317.9 257.5V259.8M318.8 257.2V259.8M320.4 254.8V256.6M321.2 255.0V256.6M323.7 253.4V254.8M326.9 253.6V255.7M334.2 256.0V257.6M335.1 256.3V258.5M335.9 257.3V259.5M341.6 259.3V260.3M344.0 258.3V260.0M346.5 256.8V258.3M347.3 257.1V258.6M348.1 255.9V257.0M349.7 255.6V257.0M350.5 256.7V258.6M351.4 257.5V259.2M352.2 258.4V259.1M353.0 258.2V259.3M353.8 257.8V259.0M355.4 258.1V259.1M356.3 256.7V257.9M357.1 256.9V258.5M358.7 255.9V261.7M359.5 260.5V263.7M360.3 260.9V262.3M361.1 260.8V262.0M362.0 259.9V261.9M364.4 256.4V259.1M370.9 248.4V251.4M372.6 245.8V249.3M377.4 241.3V243.1M380.7 245.3V247.4M381.5 246.0V248.7M385.6 254.5V258.2M386.4 256.3V259.8M392.1 262.0V263.5M392.9 261.2V262.5M395.4 259.2V260.9M401.9 258.3V259.3M404.3 259.4V261.0M406.0 259.7V262.6M412.5 271.6V274.0M423.9 267.8V268.6M427.2 270.0V271.6M428.0 270.0V271.2M432.0 258.3V261.0M432.9 258.1V260.9M433.7 260.0V262.9M435.3 262.3V264.9M436.1 264.7V266.5M436.9 262.7V265.5M437.8 261.0V263.8M438.6 259.6V261.5M439.4 260.2V261.5M441.8 260.8V263.7M442.6 262.3V266.5M443.5 264.7V268.4M447.5 265.6V267.9M448.3 267.3V270.1M450.0 269.1V271.2M453.2 271.5V272.5M454.9 272.5V273.5M456.5 272.2V274.5M457.3 273.5V275.9M458.9 273.7V275.2M459.8 273.5V274.9M460.6 273.3V274.9M461.4 272.0V273.8M462.2 271.7V273.6M463.0 271.5V273.4M463.8 271.4V272.6M464.6 271.1V271.9M468.7 269.2V270.4M471.2 267.7V269.1M472.0 267.2V269.0M480.9 264.3V266.7M481.8 262.3V265.0M482.6 261.9V264.7M485.8 257.7V259.9M488.3 256.9V258.4M491.5 255.2V256.5M493.2 254.1V255.7M494.8 254.5V257.1M495.6 254.7V257.3M496.4 256.5V259.1M497.2 257.3V259.7M499.7 258.1V258.9M503.8 257.0V258.9M504.6 257.8V259.8M505.4 258.7V260.6M506.2 258.7V260.2M507.8 259.9V261.2M509.5 259.1V261.5M512.7 253.4V257.9M513.5 249.5V255.0M514.4 247.6V251.0M525.8 248.5V249.2M526.6 247.9V249.7M527.4 248.4V249.1M529.0 247.8V249.7M531.5 250.1V251.0M532.3 250.5V251.9M533.9 251.0V252.4M536.4 249.8V250.7M538.0 250.6V253.9M539.6 253.6V256.9M540.4 254.4V258.0M541.3 256.1V259.9M542.1 259.1V259.7M542.9 255.5V260.0M543.7 253.8V257.6M544.5 253.6V256.1M545.3 252.8V254.6M550.2 243.4V247.5M557.6 241.2V244.6M564.1 241.7V243.5M571.4 239.7V240.5M573.0 237.8V240.0M576.3 235.9V238.7M577.1 237.3V239.6M577.9 238.0V240.1M579.6 239.5V241.4M580.4 239.9V241.2M582.0 241.8V244.0M582.8 238.9V241.5M583.6 239.4V241.4M586.1 242.1V244.5M586.9 244.3V246.4M590.2 241.5V243.8M594.2 238.1V240.4M595.0 236.6V239.2M603.2 232.4V234.1M604.8 231.6V233.3M605.6 230.9V233.1M609.7 226.1V228.0M611.3 225.5V227.7M621.1 227.1V228.7M624.4 220.6V226.6M626.0 218.1V221.4M633.4 219.7V221.5M638.2 222.9V227.2M639.9 227.0V231.9M640.7 229.5V234.9M648.0 237.7V240.3M649.7 238.3V239.8M651.3 237.8V242.3M652.9 241.8V244.6M654.5 240.7V244.1M655.4 242.4V246.9M661.9 250.1V251.5M662.7 249.5V251.4M663.5 250.6V253.6M664.3 250.8V253.5M665.1 253.2V256.0M666.8 254.7V256.4M667.6 255.2V256.2M668.4 253.4V255.0M670.0 251.5V254.8M675.7 239.9V243.7M677.4 236.2V240.5M678.2 235.2V238.5M679.0 234.1V236.7M679.8 233.2V234.9M680.6 232.8V236.6M681.4 236.4V239.9M682.3 238.6V240.5M685.5 228.2V232.8M689.6 231.2V233.9M691.2 232.4V235.2M696.9 238.3V240.9M697.7 238.9V242.8M705.1 248.3V250.8M709.1 246.1V249.0M710.0 246.2V249.3M713.2 252.6V255.1M714.0 253.1V255.2M717.3 251.6V254.2M721.4 244.9V248.0M723.0 242.9V246.4M723.8 239.1V243.0M724.6 238.4V242.2M725.4 237.2V241.0M727.1 234.2V236.0M728.7 238.2V241.9M730.3 240.6V241.8M731.2 240.2V241.5M732.8 240.8V241.6M738.5 246.4V248.2M739.3 247.4V248.4M742.6 245.0V246.4M743.4 245.4V246.8M745.0 242.4V245.0M745.8 244.4V249.8M746.6 247.2V251.9M747.5 249.8V253.1M748.3 251.8V254.5M749.1 252.0V254.7M753.2 253.3V254.9M757.2 258.7V262.5M758.0 261.0V264.0M759.7 262.3V265.1M762.1 267.1V271.5M768.6 271.3V272.2M772.7 278.0V281.8M773.5 279.9V282.5M779.2 286.5V289.8M780.1 287.5V291.4M781.7 290.9V293.2M782.5 291.7V293.4M783.3 292.2V293.8M784.1 291.1V292.5M785.8 291.6V296.1M788.2 298.7V303.3M789.0 299.9V303.1M792.3 302.5V304.5M793.1 301.8V304.4M795.5 299.3V300.9M796.4 299.4V301.5M797.2 300.3V302.1M798.0 300.9V302.6M801.2 300.9V303.7M802.1 299.7V302.5M802.9 299.2V300.1M803.7 299.3V301.2M804.5 300.2V302.4M805.3 301.2V303.4M806.1 301.5V303.7M808.6 304.4V306.4M810.2 306.6V307.5M811.0 306.4V307.2M811.8 305.9V308.5M812.7 305.9V308.5M813.5 307.5V310.2M814.3 308.6V311.1M815.1 310.6V311.4M816.7 309.0V310.7M817.5 308.5V309.5M819.2 308.3V310.5M820.0 309.7V311.9M820.8 310.5V313.1M828.1 310.4V311.7M829.0 310.4V311.9M829.8 312.2V313.2M830.6 312.0V314.0M832.2 313.8V315.9M833.0 315.1V316.7M835.5 315.4V316.8M837.1 315.5V316.2M837.9 315.0V315.9M839.5 315.7V317.4M840.4 316.4V318.3M841.2 316.7V318.3M843.6 319.1V320.2M844.4 318.2V319.0M845.3 318.6V320.0M846.9 318.1V319.1M847.7 317.9V319.9M848.5 318.9V320.9M850.1 313.9V319.7M853.4 315.6V316.6M854.2 315.1V316.6M855.8 315.2V315.8M857.5 314.4V316.0M858.3 314.1V315.5M861.6 315.6V320.0M862.4 318.3V321.9M864.0 321.0V323.9M864.8 321.8V324.3M865.6 323.7V326.0M866.4 324.6V326.6M867.3 325.2V326.9M871.3 324.9V327.2M873.0 322.8V324.6M873.8 322.8V324.3M877.0 319.6V322.6M882.7 309.7V310.7M883.6 309.7V311.1M884.4 309.6V311.0M885.2 310.5V311.8M888.4 309.7V310.7M892.5 307.6V309.5M893.3 307.2V308.3M894.2 306.9V307.6M896.6 304.3V307.1M897.4 303.3V306.2M898.2 302.6V304.5M899.0 303.3V304.6M899.9 301.9V303.8M904.7 304.2V305.5M906.4 304.3V305.9M912.1 304.6V305.9M912.9 304.9V306.9M914.5 307.0V308.7M915.3 307.5V308.2M918.6 307.6V309.5M921.0 309.2V310.9M923.5 306.8V309.0M924.3 305.8V308.1M925.1 304.4V306.8M925.9 303.1V305.5M930.0 301.9V303.2M930.8 302.7V303.4M931.6 301.9V303.4M932.5 301.7V303.4M934.9 300.3V302.0M938.2 299.1V300.8M941.4 300.5V303.2M942.2 301.2V304.4M943.1 303.1V306.0M943.9 304.7V307.4M944.7 305.5V307.8M945.5 306.7V308.5M947.1 307.8V308.6M947.9 306.4V307.9M949.6 306.9V308.4M950.4 307.8V309.7M951.2 308.2V310.1M952.0 308.8V310.7M953.6 310.2V311.2M954.5 310.4V311.1M955.3 310.2V310.9M956.1 309.2V310.9M957.7 307.4V309.3M961.8 308.4V309.3M963.4 308.4V309.6M964.2 308.7V309.3M965.1 307.8V309.4M967.5 306.8V307.8M968.3 307.4V308.7M969.1 307.8V309.9M969.9 308.8V310.3" stroke="#efe07c"/>
<path d="M22.1 268.3V269.9M58.0 261.8V264.6M61.2 259.3V262.1M62.0 258.2V261.3M71.0 262.2V265.2M87.3 259.0V261.9M89.7 259.8V263.4M90.6 260.6V262.7M91.4 260.8V262.7M93.0 259.3V261.4M97.1 260.0V261.6M110.1 256.0V258.6M112.6 257.8V260.0M118.3 257.2V260.9M123.2 261.4V264.4M124.0 262.2V265.5M128.9 264.6V267.2M129.7 266.3V268.0M130.5 266.0V268.1M135.4 262.5V266.4M136.2 261.7V266.2M137.0 258.8V262.8M153.3 253.9V258.3M158.2 257.1V259.8M177.8 261.2V264.6M178.6 263.3V265.3M179.4 263.2V265.7M180.2 264.3V267.3M181.0 264.2V268.3M183.5 269.5V272.7M190.0 269.8V272.4M193.3 271.1V273.8M194.1 272.8V276.3M198.1 269.5V271.5M201.4 266.7V269.5M215.3 263.6V265.3M216.1 262.2V265.0M218.5 261.1V263.5M234.8 255.8V258.2M238.1 256.8V260.5M292.7 264.7V266.7M324.5 253.0V255.5M329.4 255.6V257.0M330.2 255.1V257.0M331.0 255.2V257.3M331.8 254.8V256.6M336.7 258.0V259.5M337.5 258.1V259.8M357.9 256.0V258.4M378.3 242.4V244.6M379.9 244.4V248.1M382.3 246.2V250.4M383.1 248.4V253.5M384.0 252.1V257.2M384.8 252.3V256.8M387.2 259.1V263.6M388.0 260.7V264.2M388.9 261.8V266.0M401.1 257.9V259.4M403.5 257.3V260.7M405.2 259.3V261.1M409.2 265.1V268.5M410.0 267.1V270.6M410.9 266.7V271.1M411.7 269.4V272.6M428.8 267.9V271.1M440.2 259.5V261.8M441.0 261.5V263.9M467.9 269.2V271.0M476.9 268.0V269.8M477.7 266.8V269.1M480.1 264.7V266.8M547.0 250.5V254.5M560.8 235.9V239.6M561.6 237.7V242.9M562.4 238.6V244.0M564.9 240.5V244.0M578.7 239.3V241.3M589.3 242.6V244.7M597.5 232.0V234.5M604.0 231.7V234.5M612.2 222.1V227.4M613.8 221.4V226.4M614.6 221.7V224.5M617.9 222.3V226.4M619.5 226.2V229.5M620.3 227.0V230.6M631.7 214.8V221.2M632.5 216.6V219.3M634.2 217.9V222.5M635.0 219.4V222.8M635.8 218.1V221.1M636.6 219.1V224.2M637.4 220.8V225.5M639.1 225.4V230.0M641.5 232.8V237.4M643.1 234.9V239.9M643.9 234.4V240.3M644.8 236.7V241.4M652.1 241.1V244.2M656.2 244.3V248.5M657.0 247.2V251.8M658.6 249.3V252.7M659.4 249.6V252.5M672.5 245.6V250.0M688.0 228.5V232.2M690.4 232.0V235.9M692.0 233.9V238.0M695.3 235.4V239.6M698.6 238.9V244.7M699.4 242.3V248.8M700.2 244.3V250.9M702.6 252.5V257.0M708.3 243.4V248.2M710.8 247.3V250.6M711.6 248.4V251.8M712.4 250.1V253.3M714.9 251.3V256.4M727.9 235.4V240.8M736.0 242.3V245.9M736.9 244.3V247.5M737.7 244.8V247.2M752.3 252.9V255.6M754.0 253.9V256.7M754.8 255.2V258.0M756.4 256.9V260.5M758.9 262.5V264.8M760.5 263.6V267.6M761.3 265.6V269.9M763.8 270.0V273.1M764.6 270.1V273.3M765.4 270.5V273.6M766.2 270.6V274.4M767.8 271.2V274.6M769.5 270.9V274.1M770.3 271.5V275.4M771.1 273.0V277.2M771.9 275.1V279.8M774.3 279.3V283.5M776.0 283.3V285.7M777.6 283.3V287.2M778.4 284.5V287.6M784.9 291.9V294.2M786.6 293.7V298.3M789.8 300.9V303.8M790.6 301.7V305.4M798.8 301.6V303.3M799.6 302.4V304.5M800.4 301.5V303.5M807.8 303.4V306.2M831.4 312.4V315.3M855.0 314.6V318.0M859.9 311.5V314.0M860.7 312.9V317.5M863.2 318.9V322.0M869.7 325.5V328.5M874.6 322.5V326.6M903.1 303.1V305.2M903.9 303.6V306.3M911.3 304.3V305.9M934.1 300.5V302.3M940.6 300.4V302.1M946.3 307.6V309.4" stroke="#1279ec"/>
<path d="M37.6 270.4V271.9M47.4 268.2V271.2M49.8 265.4V268.5M50.6 266.5V268.6M51.4 267.4V269.6M53.1 265.5V268.3M54.7 263.5V265.6M55.5 264.4V266.4M56.3 263.0V265.8M59.6 260.4V263.3M60.4 259.2V263.8M62.9 260.0V264.1M67.7 264.3V267.9M75.9 259.9V262.5M79.2 259.3V261.4M88.9 260.6V262.3M96.3 259.2V261.0M101.2 258.5V260.9M102.8 257.6V261.0M103.6 257.2V260.0M104.4 257.2V259.1M105.2 256.2V258.2M106.0 255.0V257.8M106.9 254.8V256.8M119.1 258.4V260.5M124.8 263.2V265.5M131.3 264.7V269.3M134.6 264.8V267.4M137.8 257.4V260.9M138.6 257.0V259.5M144.4 258.7V260.6M148.4 251.6V255.8M175.3 260.8V263.9M184.3 270.8V274.1M185.9 275.0V277.2M186.7 272.4V276.1M187.5 271.2V274.2M188.4 270.3V272.8M196.5 271.4V275.0M199.8 267.6V269.6M205.5 265.5V266.9M214.4 263.2V265.9M221.8 259.7V261.6M225.9 256.6V260.3M226.7 257.5V259.6M233.2 256.8V260.5M246.2 251.4V253.4M247.0 251.7V254.2M277.2 260.2V262.7M294.3 263.5V265.6M304.9 264.0V265.3M319.6 255.6V257.9M342.4 258.8V260.9M343.2 259.3V260.8M362.8 258.8V262.1M363.6 258.1V261.0M367.7 255.0V257.4M368.5 253.8V257.2M369.3 252.7V256.2M371.7 247.6V251.3M373.4 245.5V248.5M375.0 243.6V246.2M375.8 243.0V245.8M376.6 242.5V246.2M391.3 262.2V264.0M393.7 260.7V265.2M396.2 258.9V260.6M397.0 258.8V260.5M397.8 258.4V260.5M398.6 257.7V261.0M399.4 258.0V260.1M414.1 271.1V273.9M415.7 271.7V273.9M416.6 270.3V273.0M419.8 269.7V272.9M421.5 268.3V271.0M430.4 263.0V269.4M431.2 258.6V265.9M434.5 261.1V264.9M449.2 268.9V271.3M470.4 268.1V269.7M479.3 266.2V268.1M483.4 260.5V263.4M484.2 259.4V262.3M485.0 258.0V260.9M510.3 257.7V260.3M511.1 255.9V259.0M511.9 254.7V257.7M515.2 248.4V250.9M547.8 250.3V254.3M548.6 250.1V253.3M549.4 245.3V252.5M551.0 244.3V247.3M555.1 242.2V244.8M558.4 240.0V243.5M559.2 237.6V241.3M569.0 235.1V239.8M570.6 236.1V239.4M573.9 235.3V238.6M574.7 235.3V238.1M587.7 243.6V245.9M595.9 234.1V239.1M596.7 231.3V236.1M598.3 233.0V235.9M600.8 233.1V235.6M606.5 229.6V233.6M607.3 228.6V231.5M608.1 228.3V231.6M608.9 227.2V230.0M610.5 225.4V229.0M615.4 222.2V225.5M616.2 220.7V224.2M621.9 227.7V232.3M623.6 223.0V230.3M625.2 219.8V224.3M626.8 216.1V220.6M630.1 213.6V217.7M645.6 240.2V243.8M660.2 249.6V253.2M669.2 251.0V255.2M671.7 248.1V252.9M673.3 244.5V248.4M674.1 241.7V245.4M674.9 241.4V246.2M676.5 239.1V243.5M683.1 235.1V240.2M683.9 233.9V238.5M684.7 231.4V236.9M686.3 226.9V233.1M688.8 229.3V233.9M692.8 236.4V239.4M694.5 236.2V241.1M696.1 235.4V241.4M701.0 246.5V254.2M701.8 254.3V258.7M703.4 248.7V253.9M705.9 246.4V250.7M707.5 242.9V246.7M715.7 252.7V255.8M716.5 252.5V257.1M718.9 247.3V252.6M719.7 247.3V251.3M720.6 245.0V249.4M722.2 243.2V246.8M726.3 235.1V238.5M735.2 241.5V244.2M740.9 246.3V248.2M741.7 245.4V247.7M751.5 253.7V255.8M787.4 296.1V300.6M791.5 302.3V306.6M793.9 298.4V302.2M794.7 298.1V300.2M825.7 310.8V312.7M849.3 317.8V321.6M851.0 312.2V315.6M851.8 313.6V315.8M868.1 325.5V327.5M872.1 324.1V327.2M875.4 323.4V326.2M876.2 321.2V323.5M878.7 317.6V321.8M879.5 314.3V319.9M880.3 310.7V316.1M881.1 309.1V313.8M881.9 308.5V311.4M889.3 309.1V310.6M926.8 302.3V304.9M928.4 301.5V302.9M939.8 299.9V302.3M956.9 308.3V311.7" stroke="#f01212"/>
<path d="M47.9 266V275.6" stroke="#b00808"/>
</g>
<g filter="url(#bt)">
<text transform="translate(12.00 341.90) scale(0.81 1)" x="0.15 6.22" y="0" font-size="10.4" fill="#b4b4b4" stroke="#b4b4b4" stroke-width="0.25">05</text>
<text transform="translate(35.16 341.90) scale(0.78 1)" x="0.26 6.57" y="0" font-size="10.4" fill="#f4f4f4" stroke="#f4f4f4" stroke-width="0.12" font-weight="bold">06</text>
<text transform="translate(60.30 341.90) scale(0.81 1)" x="0.15 6.22" y="0" font-size="10.4" fill="#b4b4b4" stroke="#b4b4b4" stroke-width="0.25">09</text>
<text transform="translate(108.80 341.90) scale(0.81 1)" x="0.15 6.22" y="0" font-size="10.4" fill="#b4b4b4" stroke="#b4b4b4" stroke-width="0.25">10</text>
<text transform="translate(157.30 341.90) scale(0.81 1)" x="0.15 6.22" y="0" font-size="10.4" fill="#b4b4b4" stroke="#b4b4b4" stroke-width="0.25">11</text>
<text transform="translate(205.60 341.90) scale(0.81 1)" x="0.15 6.22" y="0" font-size="10.4" fill="#b4b4b4" stroke="#b4b4b4" stroke-width="0.25">12</text>
<text transform="translate(253.80 341.90) scale(0.81 1)" x="0.15 6.22" y="0" font-size="10.4" fill="#b4b4b4" stroke="#b4b4b4" stroke-width="0.25">13</text>
<text transform="translate(302.50 341.90) scale(0.81 1)" x="0.15 6.22" y="0" font-size="10.4" fill="#b4b4b4" stroke="#b4b4b4" stroke-width="0.25">14</text>
<text transform="translate(336.96 341.90) scale(0.81 1)" x="0.15 6.22" y="0" font-size="10.4" fill="#b4b4b4" stroke="#b4b4b4" stroke-width="0.25">15</text>
<text transform="translate(359.50 341.90) scale(0.81 1)" x="0.15 6.22" y="0" font-size="10.4" fill="#b4b4b4" stroke="#b4b4b4" stroke-width="0.25">16</text>
<text transform="translate(384.30 341.90) scale(0.81 1)" x="0.15 6.22" y="0" font-size="10.4" fill="#b4b4b4" stroke="#b4b4b4" stroke-width="0.25">17</text>
<text transform="translate(431.50 341.90) scale(0.81 1)" x="0.15 6.22" y="0" font-size="10.4" fill="#b4b4b4" stroke="#b4b4b4" stroke-width="0.25">18</text>
<text transform="translate(480.10 341.90) scale(0.81 1)" x="0.15 6.22" y="0" font-size="10.4" fill="#b4b4b4" stroke="#b4b4b4" stroke-width="0.25">19</text>
<text transform="translate(524.50 341.90) scale(0.81 1)" x="0.15 6.22" y="0" font-size="10.4" fill="#b4b4b4" stroke="#b4b4b4" stroke-width="0.25">20</text>
<text transform="translate(569.60 341.90) scale(0.81 1)" x="0.15 6.22" y="0" font-size="10.4" fill="#b4b4b4" stroke="#b4b4b4" stroke-width="0.25">21</text>
<text transform="translate(618.40 341.90) scale(0.81 1)" x="0.15 6.22" y="0" font-size="10.4" fill="#b4b4b4" stroke="#b4b4b4" stroke-width="0.25">22</text>
<text transform="translate(666.20 341.90) scale(0.81 1)" x="0.15 6.22" y="0" font-size="10.4" fill="#b4b4b4" stroke="#b4b4b4" stroke-width="0.25">23</text>
<text transform="translate(714.10 341.90) scale(0.81 1)" x="0.15 6.22" y="0" font-size="10.4" fill="#b4b4b4" stroke="#b4b4b4" stroke-width="0.25">00</text>
<text transform="translate(761.70 341.90) scale(0.81 1)" x="0.15 6.22" y="0" font-size="10.4" fill="#b4b4b4" stroke="#b4b4b4" stroke-width="0.25">01</text>
<text transform="translate(810.30 341.90) scale(0.81 1)" x="0.15 6.22" y="0" font-size="10.4" fill="#b4b4b4" stroke="#b4b4b4" stroke-width="0.25">02</text>
<text transform="translate(858.30 341.90) scale(0.81 1)" x="0.15 6.22" y="0" font-size="10.4" fill="#b4b4b4" stroke="#b4b4b4" stroke-width="0.25">03</text>
<text transform="translate(904.50 341.90) scale(0.81 1)" x="0.15 6.22" y="0" font-size="10.4" fill="#b4b4b4" stroke="#b4b4b4" stroke-width="0.25">04</text>
<text transform="translate(941.20 341.90) scale(0.81 1)" x="0.15 6.22" y="0" font-size="10.4" fill="#b4b4b4" stroke="#b4b4b4" stroke-width="0.25">05</text>
<text transform="translate(958.16 341.90) scale(0.81 1)" x="0.15 6.22" y="0" font-size="10.4" fill="#b4b4b4" stroke="#b4b4b4" stroke-width="0.25">06</text>
<text transform="translate(714.10 329.30) scale(0.81 1)" x="0.12 6.19" y="0" font-size="10.5" fill="#bcbcbc" stroke="#bcbcbc" stroke-width="0.25">07</text>
<text transform="translate(972.70 219.20) scale(0.81 1)" x="0.12 7.65 12.27 18.34 24.41" y="0" font-size="10.5" fill="#acacac" stroke="#acacac" stroke-width="0.25">4,275</text>
<text transform="translate(972.70 247.30) scale(0.81 1)" x="0.12 7.65 12.27 18.34 24.41" y="0" font-size="10.5" fill="#acacac" stroke="#acacac" stroke-width="0.25">4,250</text>
<text transform="translate(972.70 275.70) scale(0.81 1)" x="0.12 7.65 12.27 18.34 24.41" y="0" font-size="10.5" fill="#acacac" stroke="#acacac" stroke-width="0.25">4,225</text>
<text transform="translate(972.70 303.70) scale(0.81 1)" x="0.12 7.65 12.27 18.34 24.41" y="0" font-size="10.5" fill="#acacac" stroke="#acacac" stroke-width="0.25">4,200</text>
<text transform="translate(972.70 332.00) scale(0.81 1)" x="0.12 7.65 12.27 18.34 24.41" y="0" font-size="10.5" fill="#acacac" stroke="#acacac" stroke-width="0.25">4,175</text>
<rect x="972.0" y="302.6" width="47.29999999999993" height="16.5" fill="#d2d2d2"/>
<text transform="translate(982.60 313.00) scale(0.84 1)" x="0.24 7.66 12.30 18.34 24.37" y="0" font-size="10.0" fill="#000" stroke="#000" stroke-width="0.12" font-weight="bold">4,195</text>
<text x="6.20" y="215.90" font-size="9.84" textLength="19.68" lengthAdjust="spacingAndGlyphs" fill="#cacaca" class="j">時刻</text><text transform="translate(25.88 216.30) scale(0.81 1)" x="1.58 6.19 12.27 19.80 24.41 30.49 38.02" y="0" font-size="10.5" fill="#cacaca" stroke="#cacaca" stroke-width="0.25">:06:00 </text><text x="60.32" y="215.90" font-size="9.84" textLength="19.68" lengthAdjust="spacingAndGlyphs" fill="#cacaca" class="j">始値</text><text transform="translate(80.00 216.30) scale(0.81 1)" x="1.58 6.19 13.73 18.34 24.41 30.49 38.02" y="0" font-size="10.5" fill="#cacaca" stroke="#cacaca" stroke-width="0.25">:4,195 </text><text x="114.44" y="215.90" font-size="9.84" textLength="19.68" lengthAdjust="spacingAndGlyphs" fill="#cacaca" class="j">高値</text><text transform="translate(134.12 216.30) scale(0.81 1)" x="1.58 6.19 13.73 18.34 24.41 30.49 38.02" y="0" font-size="10.5" fill="#cacaca" stroke="#cacaca" stroke-width="0.25">:4,195 </text><text x="168.56" y="215.90" font-size="9.84" textLength="19.68" lengthAdjust="spacingAndGlyphs" fill="#cacaca" class="j">安値</text><text transform="translate(188.24 216.30) scale(0.81 1)" x="1.58 6.19 13.73 18.34 24.41 30.49 38.02" y="0" font-size="10.5" fill="#cacaca" stroke="#cacaca" stroke-width="0.25">:4,195 </text><text x="222.68" y="215.90" font-size="9.84" textLength="19.68" lengthAdjust="spacingAndGlyphs" fill="#cacaca" class="j">終値</text><text transform="translate(242.36 216.30) scale(0.81 1)" x="1.58 6.19 13.73 18.34 24.41 30.49" y="0" font-size="10.5" fill="#cacaca" stroke="#cacaca" stroke-width="0.25">:4,195</text>
</g>
<rect x="4.6" y="350" width="1014.6999999999999" height="197" fill="#1b1b1b"/>
<rect x="4.6" y="351" width="1.3000000000000007" height="183.5" fill="#b6b6b6"/>
<rect x="5.9" y="351" width="965.1" height="183.5" fill="#000"/>
<rect x="4.6" y="349.7" width="968.4" height="1.4" fill="#a4a4a4"/>
<g filter="url(#bl)"><path d="M12 351V534.5M46.4 351V534.5M48.3 351V534.5M59.6 351V534.5M108 351V534.5M156.5 351V534.5M204.6 351V534.5M253 351V534.5M301.7 351V534.5M349.2 351V534.5M358.7 351V534.5M383.3 351V534.5M430.6 351V534.5M479.3 351V534.5M523.7 351V534.5M568.8 351V534.5M617.6 351V534.5M665.4 351V534.5M713.3 351V534.5M760.9 351V534.5M809.5 351V534.5M857.5 351V534.5M903.7 351V534.5M940.4 351V534.5M5.9 359.4H971.0M5.9 395.7H971.0M5.9 432.4H971.0M5.9 469H971.0M5.9 505.6H971.0" stroke="#393939" stroke-width="0.95" fill="none"/><path d="M12 351V534.5M46.4 351V534.5M48.3 351V534.5M59.6 351V534.5M108 351V534.5M156.5 351V534.5M204.6 351V534.5M253 351V534.5M301.7 351V534.5M349.2 351V534.5M358.7 351V534.5M383.3 351V534.5M430.6 351V534.5M479.3 351V534.5M523.7 351V534.5M568.8 351V534.5M617.6 351V534.5M665.4 351V534.5M713.3 351V534.5M760.9 351V534.5M809.5 351V534.5M857.5 351V534.5M903.7 351V534.5M940.4 351V534.5M5.9 359.4H971.0M5.9 395.7H971.0M5.9 432.4H971.0M5.9 469H971.0M5.9 505.6H971.0" stroke="#787878" stroke-width="0.95" stroke-dasharray="1.63 0.82" fill="none"/></g>
<rect x="970.8" y="351" width="1.7" height="184.0" fill="#8a8a8a"/>
<rect x="4.6" y="533.9" width="967.9" height="1.15" fill="#b2b2b2"/>
<path d="M5.6 501.4L6.4 500.4L7.2 498.2L8.0 498.9L8.9 499.9L9.7 500.2L10.5 498.3L11.3 500.2L12.1 501.1L12.9 498.9L13.7 501.0L14.6 500.0L15.4 498.8L16.2 496.8L17.0 492.3L17.8 492.1L18.6 492.1L19.5 494.3L20.3 495.0L21.1 499.1L21.9 503.3L22.7 500.4L23.5 499.7L24.3 498.8L25.2 497.5L26.0 497.8L26.8 499.1L27.6 499.2L28.4 499.6L29.2 500.8L30.0 500.1L30.9 497.8L31.7 495.3L32.5 498.7L33.3 498.7L34.1 496.1L34.9 495.8L35.8 496.3L36.6 495.5L37.4 498.4L38.2 499.6L39.0 501.4L39.8 500.0L40.6 499.9L41.5 497.3L42.3 499.2L43.1 502.0L43.9 501.0L44.7 498.6L45.5 499.9L46.3 497.8L47.2 496.4L48.0 498.8L48.8 507.4L49.6 512.0L50.4 514.1L51.2 511.5L52.1 510.3L52.9 511.5L53.7 513.3L54.5 514.5L55.3 515.4L56.1 518.0L56.9 519.0L57.8 520.9L58.6 518.7L59.4 518.7L60.2 516.1L61.0 515.1L61.8 519.4L62.6 516.5L63.5 516.3L64.3 511.5L65.1 511.0L65.9 510.0L66.7 510.6L67.5 510.2L68.4 509.5L69.2 508.4L70.0 507.5L70.8 510.6L71.6 511.5L72.4 513.7L73.2 510.5L74.1 508.2L74.9 509.0L75.7 510.1L76.5 507.1L77.3 508.5L78.1 505.0L78.9 507.2L79.8 507.4L80.6 508.8L81.4 507.1L82.2 508.4L83.0 504.4L83.8 505.6L84.7 506.3L85.5 510.1L86.3 506.8L87.1 503.7L87.9 504.5L88.7 502.9L89.5 503.7L90.4 504.7L91.2 503.5L92.0 505.9L92.8 502.8L93.6 501.8L94.4 502.3L95.2 504.2L96.1 502.7L96.9 504.0L97.7 502.7L98.5 502.9L99.3 499.1L100.1 498.3L101.0 495.8L101.8 497.0L102.6 500.7L103.4 501.3L104.2 500.6L105.0 500.9L105.8 502.3L106.7 500.8L107.5 501.2L108.3 504.8L109.1 501.0L109.9 503.1L110.7 507.1L111.5 509.2L112.4 511.2L113.2 512.6L114.0 508.1L114.8 508.0L115.6 510.5L116.4 514.6L117.3 510.7L118.1 506.8L118.9 506.6L119.7 509.3L120.5 506.8L121.3 505.2L122.1 502.6L123.0 500.6L123.8 499.7L124.6 499.4L125.4 498.5L126.2 499.3L127.0 496.7L127.8 495.2L128.7 495.6L129.5 498.0L130.3 498.6L131.1 497.8L131.9 501.1L132.7 500.8L133.6 499.9L134.4 497.7L135.2 500.2L136.0 501.6L136.8 498.8L137.6 500.7L138.4 503.7L139.3 508.1L140.1 507.1L140.9 506.2L141.7 505.2L142.5 506.1L143.3 504.4L144.1 505.5L145.0 504.3L145.8 506.7L146.6 505.0L147.4 507.3L148.2 507.9L149.0 507.8L149.9 509.0L150.7 509.0L151.5 509.8L152.3 513.6L153.1 510.6L153.9 511.5L154.7 507.6L155.6 506.8L156.4 505.7L157.2 506.4L158.0 508.2L158.8 509.1L159.6 509.4L160.4 507.7L161.3 507.5L162.1 509.9L162.9 506.1L163.7 504.5L164.5 504.0L165.3 504.4L166.2 504.2L167.0 502.7L167.8 501.7L168.6 507.5L169.4 506.4L170.2 503.1L171.0 503.4L171.9 505.7L172.7 502.7L173.5 501.4L174.3 501.3L175.1 501.6L175.9 498.9L176.7 498.3L177.6 493.5L178.4 494.2L179.2 492.4L180.0 491.4L180.8 489.8L181.6 490.1L182.5 487.1L183.3 486.5L184.1 486.2L184.9 482.1L185.7 478.2L186.5 475.1L187.3 475.1L188.2 476.7L189.0 480.9L189.8 480.6L190.6 484.5L191.4 484.1L192.2 485.9L193.0 487.5L193.9 483.3L194.7 479.0L195.5 479.4L196.3 480.7L197.1 480.6L197.9 478.3L198.8 479.4L199.6 481.3L200.4 480.2L201.2 480.0L202.0 485.2L202.8 484.1L203.6 484.6L204.5 483.8L205.3 482.0L206.1 482.3L206.9 482.5L207.7 481.6L208.5 484.6L209.3 487.6L210.2 486.1L211.0 486.7L211.8 486.9L212.6 486.4L213.4 482.8L214.2 485.8L215.1 488.6L215.9 491.8L216.7 488.7L217.5 487.9L218.3 486.7L219.1 490.6L219.9 492.7L220.8 490.5L221.6 489.5L222.4 488.3L223.2 489.3L224.0 489.7L224.8 491.8L225.6 495.7L226.5 492.3L227.3 493.4L228.1 492.5L228.9 494.6L229.7 493.5L230.5 492.9L231.4 491.4L232.2 491.1L233.0 490.4L233.8 486.8L234.6 490.1L235.4 490.9L236.2 491.1L237.1 493.6L237.9 491.2L238.7 488.1L239.5 487.4L240.3 486.5L241.1 486.1L241.9 488.8L242.8 488.3L243.6 490.1L244.4 491.4L245.2 493.0L246.0 491.8L246.8 486.8L247.7 488.1L248.5 489.6L249.3 489.5L250.1 491.6L250.9 488.6L251.7 486.8L252.5 487.0L253.4 486.1L254.2 485.1L255.0 484.4L255.8 483.0L256.6 482.4L257.4 484.7L258.2 484.4L259.1 479.8L259.9 480.1L260.7 477.4L261.5 482.8L262.3 481.6L263.1 482.8L264.0 484.6L264.8 485.2L265.6 481.9L266.4 483.7L267.2 482.5L268.0 482.5L268.8 481.4L269.7 485.0L270.5 483.7L271.3 482.8L272.1 485.6L272.9 487.4L273.7 485.1L274.5 482.4L275.4 483.4L276.2 483.5L277.0 483.3L277.8 486.4L278.6 487.7L279.4 488.6L280.3 491.9L281.1 491.2L281.9 486.8L282.7 488.0L283.5 484.6L284.3 485.1L285.1 487.3L286.0 489.7L286.8 489.0L287.6 488.4L288.4 489.6L289.2 486.2L290.0 488.6L290.8 490.6L291.7 486.7L292.5 484.8L293.3 489.6L294.1 493.8L294.9 493.1L295.7 494.6L296.6 495.3L297.4 495.9L298.2 497.8L299.0 494.8L299.8 493.3L300.6 493.1L301.4 491.1L302.3 491.3L303.1 490.2L303.9 492.8L304.7 491.9L305.5 492.7L306.3 493.0L307.1 494.5L308.0 494.3L308.8 490.7L309.6 495.5L310.4 494.0L311.2 494.1L312.0 494.9L312.9 492.5L313.7 494.7L314.5 493.0L315.3 492.6L316.1 492.2L316.9 495.6L317.7 494.6L318.6 496.3L319.4 497.1L320.2 499.7L321.0 499.2L321.8 499.1L322.6 498.2L323.4 496.7L324.3 497.8L325.1 497.8L325.9 497.8L326.7 492.8L327.5 494.0L328.3 497.1L329.2 497.8L330.0 497.5L330.8 495.1L331.6 495.2L332.4 495.0L333.2 494.5L334.0 492.8L334.9 492.6L335.7 492.8L336.5 493.1L337.3 489.9L338.1 485.4L338.9 486.9L339.7 485.8L340.6 484.6L341.4 480.4L342.2 485.0L343.0 483.7L343.8 484.2L344.6 484.0L345.5 483.7L346.3 482.5L347.1 484.9L347.9 489.5L348.7 487.4L349.5 485.4L350.3 488.3L351.2 488.5L352.0 486.6L352.8 483.5L353.6 483.8L354.4 485.2L355.2 485.5L356.0 483.1L356.9 483.0L357.7 485.5L358.5 489.6L359.3 486.6L360.1 475.5L360.9 473.5L361.8 474.5L362.6 473.8L363.4 473.2L364.2 472.7L365.0 473.0L365.8 476.2L366.6 473.3L367.5 469.5L368.3 466.8L369.1 465.1L369.9 463.3L370.7 461.3L371.5 462.1L372.3 461.5L373.2 456.7L374.0 455.3L374.8 455.4L375.6 453.9L376.4 453.3L377.2 450.9L378.1 454.4L378.9 458.0L379.7 457.5L380.5 452.6L381.3 453.0L382.1 452.2L382.9 451.0L383.8 445.8L384.6 446.0L385.4 444.8L386.2 444.8L387.0 446.8L387.8 445.1L388.6 443.7L389.5 443.3L390.3 444.0L391.1 443.3L391.9 440.8L392.7 442.3L393.5 438.6L394.4 437.3L395.2 437.6L396.0 432.2L396.8 430.2L397.6 430.2L398.4 432.4L399.2 434.0L400.1 432.7L400.9 431.6L401.7 435.7L402.5 439.8L403.3 442.2L404.1 445.9L404.9 446.4L405.8 450.9L406.6 450.4L407.4 451.3L408.2 448.0L409.0 446.7L409.8 444.2L410.7 443.5L411.5 440.8L412.3 436.6L413.1 435.0L413.9 433.8L414.7 433.5L415.5 436.2L416.4 436.5L417.2 437.6L418.0 439.3L418.8 444.3L419.6 449.4L420.4 453.5L421.2 456.0L422.1 453.7L422.9 453.2L423.7 456.7L424.5 459.6L425.3 461.7L426.1 462.6L427.0 461.7L427.8 464.6L428.6 462.3L429.4 461.9L430.2 464.0L431.0 466.2L431.8 465.4L432.7 467.0L433.5 470.2L434.3 470.2L435.1 468.6L435.9 470.2L436.7 466.5L437.5 461.4L438.4 461.8L439.2 462.4L440.0 464.0L440.8 471.1L441.6 472.4L442.4 474.3L443.3 477.5L444.1 478.3L444.9 475.8L445.7 476.9L446.5 484.0L447.3 486.8L448.1 491.0L449.0 488.3L449.8 484.3L450.6 481.8L451.4 484.1L452.2 482.1L453.0 482.1L453.8 479.1L454.7 479.1L455.5 475.8L456.3 471.6L457.1 467.1L457.9 466.3L458.7 466.3L459.6 463.3L460.4 461.4L461.2 457.9L462.0 457.3L462.8 460.2L463.6 464.8L464.4 467.7L465.3 471.2L466.1 470.6L466.9 467.6L467.7 466.3L468.5 465.7L469.3 469.7L470.1 472.0L471.0 472.4L471.8 471.5L472.6 474.4L473.4 475.3L474.2 477.9L475.0 476.0L475.9 480.7L476.7 480.7L477.5 485.0L478.3 484.5L479.1 482.4L479.9 481.8L480.7 481.0L481.6 482.0L482.4 483.1L483.2 481.9L484.0 484.1L484.8 484.9L485.6 487.0L486.4 488.3L487.3 489.9L488.1 487.4L488.9 487.5L489.7 485.5L490.5 484.7L491.3 486.0L492.2 487.1L493.0 487.0L493.8 487.6L494.6 486.0L495.4 481.4L496.2 476.7L497.0 479.3L497.9 477.7L498.7 479.7L499.5 481.1L500.3 483.7L501.1 486.1L501.9 487.6L502.7 486.3L503.6 487.1L504.4 484.4L505.2 482.9L506.0 479.8L506.8 478.8L507.6 479.7L508.5 478.1L509.3 477.9L510.1 479.1L510.9 480.0L511.7 480.6L512.5 482.3L513.3 487.6L514.2 486.7L515.0 492.7L515.8 494.2L516.6 496.2L517.4 492.4L518.2 490.5L519.0 489.3L519.9 489.7L520.7 492.3L521.5 494.5L522.3 496.4L523.1 493.8L523.9 492.4L524.8 494.1L525.6 496.1L526.4 495.1L527.2 494.7L528.0 497.4L528.8 499.0L529.6 497.3L530.5 497.2L531.3 500.1L532.1 498.1L532.9 501.2L533.7 499.3L534.5 498.1L535.3 496.1L536.2 495.5L537.0 493.9L537.8 494.6L538.6 496.8L539.4 498.4L540.2 501.0L541.1 496.0L541.9 488.1L542.7 488.8L543.5 489.9L544.3 490.1L545.1 491.1L545.9 492.5L546.8 496.4L547.6 497.0L548.4 499.5L549.2 497.7L550.0 499.7L550.8 499.1L551.6 499.5L552.5 500.8L553.3 502.2L554.1 501.4L554.9 501.3L555.7 500.4L556.5 501.7L557.4 500.4L558.2 500.8L559.0 503.0L559.8 507.1L560.6 507.0L561.4 505.7L562.2 503.0L563.1 502.6L563.9 504.0L564.7 504.7L565.5 508.6L566.3 509.3L567.1 509.6L567.9 508.8L568.8 508.3L569.6 506.6L570.4 510.0L571.2 512.2L572.0 509.7L572.8 506.9L573.7 509.9L574.5 512.4L575.3 514.1L576.1 515.8L576.9 521.6L577.7 519.3L578.5 515.3L579.4 513.4L580.2 511.2L581.0 508.6L581.8 508.4L582.6 507.0L583.4 507.6L584.2 510.6L585.1 511.8L585.9 508.2L586.7 509.3L587.5 512.9L588.3 509.1L589.1 510.1L590.0 509.7L590.8 510.2L591.6 511.6L592.4 510.0L593.2 508.6L594.0 507.1L594.8 509.9L595.7 511.2L596.5 512.1L597.3 512.0L598.1 513.6L598.9 512.8L599.7 507.1L600.5 508.0L601.4 508.0L602.2 510.0L603.0 509.0L603.8 509.9L604.6 514.3L605.4 515.4L606.3 514.0L607.1 511.3L607.9 508.1L608.7 507.2L609.5 508.5L610.3 508.4L611.1 507.6L612.0 504.9L612.8 507.3L613.6 510.3L614.4 511.7L615.2 511.8L616.0 512.0L616.8 510.0L617.7 508.5L618.5 508.2L619.3 505.8L620.1 504.8L620.9 504.8L621.7 498.7L622.6 502.1L623.4 505.9L624.2 509.6L625.0 511.5L625.8 512.7L626.6 516.0L627.4 518.3L628.3 519.3L629.1 522.5L629.9 524.7L630.7 514.3L631.5 509.2L632.3 503.8L633.1 497.1L634.0 498.5L634.8 497.4L635.6 497.3L636.4 498.0L637.2 499.8L638.0 498.3L638.9 497.3L639.7 495.3L640.5 492.0L641.3 484.4L642.1 481.8L642.9 476.4L643.7 479.3L644.6 483.1L645.4 481.6L646.2 478.0L647.0 474.6L647.8 471.5L648.6 468.9L649.4 470.3L650.3 473.1L651.1 476.2L651.9 472.7L652.7 467.4L653.5 469.8L654.3 470.6L655.2 467.2L656.0 465.4L656.8 466.1L657.6 467.7L658.4 467.2L659.2 466.4L660.0 468.0L660.9 468.5L661.7 469.7L662.5 465.8L663.3 462.8L664.1 460.8L664.9 459.0L665.7 460.4L666.6 461.0L667.4 456.3L668.2 455.0L669.0 457.1L669.8 462.8L670.6 462.5L671.5 463.7L672.3 464.0L673.1 465.2L673.9 466.0L674.7 468.1L675.5 472.0L676.3 470.6L677.2 470.5L678.0 473.4L678.8 471.2L679.6 472.1L680.4 473.9L681.2 474.4L682.0 472.3L682.9 473.7L683.7 472.8L684.5 473.0L685.3 471.5L686.1 473.6L686.9 471.8L687.8 471.3L688.6 472.3L689.4 472.9L690.2 474.3L691.0 468.9L691.8 466.2L692.6 464.9L693.5 463.2L694.3 465.0L695.1 465.3L695.9 468.8L696.7 470.3L697.5 469.9L698.3 468.0L699.2 461.8L700.0 456.7L700.8 453.2L701.6 458.2L702.4 462.1L703.2 465.6L704.1 468.5L704.9 470.6L705.7 474.4L706.5 477.1L707.3 478.0L708.1 479.7L708.9 479.1L709.8 480.0L710.6 481.0L711.4 483.6L712.2 485.7L713.0 485.9L713.8 486.8L714.6 485.5L715.5 482.5L716.3 478.2L717.1 476.3L717.9 476.4L718.7 478.5L719.5 478.4L720.4 480.0L721.2 482.4L722.0 487.0L722.8 489.9L723.6 490.7L724.4 490.5L725.2 492.6L726.1 493.0L726.9 489.4L727.7 487.5L728.5 485.4L729.3 486.5L730.1 483.4L730.9 480.5L731.8 480.2L732.6 479.0L733.4 480.9L734.2 482.1L735.0 482.8L735.8 483.5L736.7 482.0L737.5 479.9L738.3 475.7L739.1 474.0L739.9 466.9L740.7 467.6L741.5 465.9L742.4 467.2L743.2 464.4L744.0 464.1L744.8 469.8L745.6 473.1L746.4 473.1L747.2 469.0L748.1 463.2L748.9 460.7L749.7 461.1L750.5 460.0L751.3 456.1L752.1 449.8L753.0 450.5L753.8 449.0L754.6 451.6L755.4 450.5L756.2 452.3L757.0 448.8L757.8 444.8L758.7 443.5L759.5 438.3L760.3 435.6L761.1 433.1L761.9 436.9L762.7 432.3L763.5 429.0L764.4 432.7L765.2 435.2L766.0 441.7L766.8 440.0L767.6 438.4L768.4 435.6L769.3 433.3L770.1 429.9L770.9 431.3L771.7 434.0L772.5 431.9L773.3 430.5L774.1 428.8L775.0 428.4L775.8 429.8L776.6 430.6L777.4 429.2L778.2 428.2L779.0 426.5L779.8 424.8L780.7 425.5L781.5 428.6L782.3 425.9L783.1 425.0L783.9 423.3L784.7 420.5L785.6 420.1L786.4 419.5L787.2 418.6L788.0 414.4L788.8 417.5L789.6 418.5L790.4 418.5L791.3 417.1L792.1 414.9L792.9 416.9L793.7 419.0L794.5 419.7L795.3 417.8L796.1 419.1L797.0 414.2L797.8 410.0L798.6 410.3L799.4 408.4L800.2 406.8L801.0 407.1L801.9 406.4L802.7 404.5L803.5 402.4L804.3 401.5L805.1 401.0L805.9 399.9L806.7 397.2L807.6 391.8L808.4 390.6L809.2 393.1L810.0 390.2L810.8 390.1L811.6 390.1L812.4 390.9L813.3 393.4L814.1 395.7L814.9 394.7L815.7 394.5L816.5 398.2L817.3 399.6L818.2 400.7L819.0 398.5L819.8 398.0L820.6 399.5L821.4 399.9L822.2 399.0L823.0 398.0L823.9 399.1L824.7 399.6L825.5 399.5L826.3 399.2L827.1 396.8L827.9 397.0L828.7 401.4L829.6 403.0L830.4 401.6L831.2 400.4L832.0 400.7L832.8 400.5L833.6 397.7L834.5 398.9L835.3 397.6L836.1 399.5L836.9 399.8L837.7 400.4L838.5 398.2L839.3 393.1L840.2 389.1L841.0 386.4L841.8 387.3L842.6 386.1L843.4 381.5L844.2 379.9L845.0 379.9L845.9 379.2L846.7 379.4L847.5 381.6L848.3 380.6L849.1 379.6L849.9 379.8L850.8 377.8L851.6 379.7L852.4 383.4L853.2 382.1L854.0 382.0L854.8 379.8L855.6 379.9L856.5 376.7L857.3 374.3L858.1 375.3L858.9 374.6L859.7 375.9L860.5 370.2L861.3 365.7L862.2 367.1L863.0 366.7L863.8 364.2L864.6 361.4L865.4 358.9L866.2 358.5L867.1 364.3L867.9 362.5L868.7 363.6L869.5 364.9L870.3 362.9L871.1 361.0L871.9 360.1L872.8 367.1L873.6 368.9L874.4 370.2L875.2 370.3L876.0 368.3L876.8 368.4L877.6 365.0L878.5 368.1L879.3 368.0L880.1 371.3L880.9 371.9L881.7 375.1L882.5 377.3L883.4 376.3L884.2 377.9L885.0 378.2L885.8 379.5L886.6 379.1L887.4 378.3L888.2 377.1L889.1 376.6L889.9 376.6L890.7 377.8L891.5 378.4L892.3 379.5L893.1 381.6L893.9 380.2L894.8 378.9L895.6 376.3L896.4 376.8L897.2 380.7L898.0 378.6L898.8 379.4L899.7 379.2L900.5 383.1L901.3 383.5L902.1 382.7L902.9 381.7L903.7 383.2L904.5 381.8L905.4 381.8L906.2 380.8L907.0 381.2L907.8 381.6L908.6 380.3L909.4 378.8L910.2 378.5L911.1 379.6L911.9 382.1L912.7 383.4L913.5 381.9L914.3 382.0L915.1 379.3L916.0 379.1L916.8 379.6L917.6 379.5L918.4 377.6L919.2 379.9L920.0 379.8L920.8 378.1L921.7 374.0L922.5 376.6L923.3 378.0L924.1 379.6L924.9 380.7L925.7 379.7L926.5 381.4L927.4 384.3L928.2 385.2L929.0 387.5L929.8 384.2L930.6 382.8L931.4 378.4L932.3 380.0L933.1 383.6L933.9 382.9L934.7 379.6L935.5 378.3L936.3 379.6L937.1 380.2L938.0 381.2L938.8 383.2L939.6 382.5L940.4 383.4L941.2 384.2L942.0 384.0L942.8 382.3L943.7 381.5L944.5 382.7L945.3 380.3L946.1 379.6L946.9 376.5L947.7 379.4L948.6 380.4L949.4 378.8L950.2 382.1L951.0 383.6L951.8 381.6L952.6 378.6L953.4 376.9L954.3 379.4L955.1 376.5L955.9 377.6L956.7 378.4L957.5 377.5L958.3 378.8L959.1 381.2L960.0 384.3L960.8 389.4L961.6 392.7L962.4 393.1L963.2 392.6L964.0 391.7L964.9 391.6L965.7 392.6L966.5 392.0L967.3 391.5L968.1 390.4L968.9 395.0L969.7 391.9L970.6 387.8" stroke="#ff0000" stroke-width="1.6" fill="none" stroke-linejoin="round" filter="url(#bl)"/>
<g filter="url(#bt)">
<text transform="translate(12.00 542.90) scale(0.81 1)" x="0.15 6.22" y="0" font-size="10.4" fill="#b4b4b4" stroke="#b4b4b4" stroke-width="0.25">05</text>
<text transform="translate(35.16 542.90) scale(0.78 1)" x="0.26 6.57" y="0" font-size="10.4" fill="#f4f4f4" stroke="#f4f4f4" stroke-width="0.12" font-weight="bold">06</text>
<text transform="translate(60.30 542.90) scale(0.81 1)" x="0.15 6.22" y="0" font-size="10.4" fill="#b4b4b4" stroke="#b4b4b4" stroke-width="0.25">09</text>
<text transform="translate(108.80 542.90) scale(0.81 1)" x="0.15 6.22" y="0" font-size="10.4" fill="#b4b4b4" stroke="#b4b4b4" stroke-width="0.25">10</text>
<text transform="translate(157.30 542.90) scale(0.81 1)" x="0.15 6.22" y="0" font-size="10.4" fill="#b4b4b4" stroke="#b4b4b4" stroke-width="0.25">11</text>
<text transform="translate(205.60 542.90) scale(0.81 1)" x="0.15 6.22" y="0" font-size="10.4" fill="#b4b4b4" stroke="#b4b4b4" stroke-width="0.25">12</text>
<text transform="translate(253.80 542.90) scale(0.81 1)" x="0.15 6.22" y="0" font-size="10.4" fill="#b4b4b4" stroke="#b4b4b4" stroke-width="0.25">13</text>
<text transform="translate(302.50 542.90) scale(0.81 1)" x="0.15 6.22" y="0" font-size="10.4" fill="#b4b4b4" stroke="#b4b4b4" stroke-width="0.25">14</text>
<text transform="translate(336.96 542.90) scale(0.81 1)" x="0.15 6.22" y="0" font-size="10.4" fill="#b4b4b4" stroke="#b4b4b4" stroke-width="0.25">15</text>
<text transform="translate(359.50 542.90) scale(0.81 1)" x="0.15 6.22" y="0" font-size="10.4" fill="#b4b4b4" stroke="#b4b4b4" stroke-width="0.25">16</text>
<text transform="translate(384.30 542.90) scale(0.81 1)" x="0.15 6.22" y="0" font-size="10.4" fill="#b4b4b4" stroke="#b4b4b4" stroke-width="0.25">17</text>
<text transform="translate(431.50 542.90) scale(0.81 1)" x="0.15 6.22" y="0" font-size="10.4" fill="#b4b4b4" stroke="#b4b4b4" stroke-width="0.25">18</text>
<text transform="translate(480.10 542.90) scale(0.81 1)" x="0.15 6.22" y="0" font-size="10.4" fill="#b4b4b4" stroke="#b4b4b4" stroke-width="0.25">19</text>
<text transform="translate(524.50 542.90) scale(0.81 1)" x="0.15 6.22" y="0" font-size="10.4" fill="#b4b4b4" stroke="#b4b4b4" stroke-width="0.25">20</text>
<text transform="translate(569.60 542.90) scale(0.81 1)" x="0.15 6.22" y="0" font-size="10.4" fill="#b4b4b4" stroke="#b4b4b4" stroke-width="0.25">21</text>
<text transform="translate(618.40 542.90) scale(0.81 1)" x="0.15 6.22" y="0" font-size="10.4" fill="#b4b4b4" stroke="#b4b4b4" stroke-width="0.25">22</text>
<text transform="translate(666.20 542.90) scale(0.81 1)" x="0.15 6.22" y="0" font-size="10.4" fill="#b4b4b4" stroke="#b4b4b4" stroke-width="0.25">23</text>
<text transform="translate(714.10 542.90) scale(0.81 1)" x="0.15 6.22" y="0" font-size="10.4" fill="#b4b4b4" stroke="#b4b4b4" stroke-width="0.25">00</text>
<text transform="translate(761.70 542.90) scale(0.81 1)" x="0.15 6.22" y="0" font-size="10.4" fill="#b4b4b4" stroke="#b4b4b4" stroke-width="0.25">01</text>
<text transform="translate(810.30 542.90) scale(0.81 1)" x="0.15 6.22" y="0" font-size="10.4" fill="#b4b4b4" stroke="#b4b4b4" stroke-width="0.25">02</text>
<text transform="translate(858.30 542.90) scale(0.81 1)" x="0.15 6.22" y="0" font-size="10.4" fill="#b4b4b4" stroke="#b4b4b4" stroke-width="0.25">03</text>
<text transform="translate(904.50 542.90) scale(0.81 1)" x="0.15 6.22" y="0" font-size="10.4" fill="#b4b4b4" stroke="#b4b4b4" stroke-width="0.25">04</text>
<text transform="translate(941.20 542.90) scale(0.81 1)" x="0.15 6.22" y="0" font-size="10.4" fill="#b4b4b4" stroke="#b4b4b4" stroke-width="0.25">05</text>
<text transform="translate(958.16 542.90) scale(0.81 1)" x="0.15 6.22" y="0" font-size="10.4" fill="#b4b4b4" stroke="#b4b4b4" stroke-width="0.25">06</text>
<text transform="translate(714.10 530.30) scale(0.81 1)" x="0.12 6.19" y="0" font-size="10.5" fill="#bcbcbc" stroke="#bcbcbc" stroke-width="0.25">07</text>
<text transform="translate(972.70 358.10) scale(0.81 1)" x="0.12 7.65 12.27 18.34 24.41" y="0" font-size="10.5" fill="#acacac" stroke="#acacac" stroke-width="0.25">5,425</text>
<text transform="translate(972.70 431.10) scale(0.81 1)" x="0.12 7.65 12.27 18.34 24.41" y="0" font-size="10.5" fill="#acacac" stroke="#acacac" stroke-width="0.25">5,375</text>
<text transform="translate(972.70 467.70) scale(0.81 1)" x="0.12 7.65 12.27 18.34 24.41" y="0" font-size="10.5" fill="#acacac" stroke="#acacac" stroke-width="0.25">5,350</text>
<text transform="translate(972.70 504.30) scale(0.81 1)" x="0.12 7.65 12.27 18.34 24.41" y="0" font-size="10.5" fill="#acacac" stroke="#acacac" stroke-width="0.25">5,325</text>
<text transform="translate(972.70 540.90) scale(0.81 1)" x="0.12 7.65 12.27 18.34 24.41" y="0" font-size="10.5" fill="#acacac" stroke="#acacac" stroke-width="0.25">5,300</text>
<rect x="972.0" y="379.8" width="47.29999999999993" height="16.19999999999999" fill="#d2d2d2"/>
<text transform="translate(982.60 390.20) scale(0.84 1)" x="0.24 7.66 12.30 18.34 24.37" y="0" font-size="10.0" fill="#000" stroke="#000" stroke-width="0.12" font-weight="bold">5,406</text>
<text transform="translate(6.20 360.30) scale(0.81 1)" x="1.58" y="0" font-size="10.5" fill="#cacaca" stroke="#cacaca" stroke-width="0.25">[</text><text x="11.12" y="359.90" font-size="9.84" textLength="9.84" lengthAdjust="spacingAndGlyphs" fill="#cacaca" class="j">金</text><text transform="translate(20.96 360.30) scale(0.81 1)" x="1.58 6.19 12.27 19.80 24.41 30.49 38.02 42.64 50.17 54.78 60.86 66.93" y="0" font-size="10.5" fill="#cacaca" stroke="#cacaca" stroke-width="0.25"> 24/10 9,601</text><text x="80.30" y="362.00" font-size="15.4" fill="#cacaca" class="j">×</text><text transform="translate(89.84 360.30) scale(0.81 1)" x="0.12 7.65 12.27 18.34 25.87" y="0" font-size="10.5" fill="#cacaca" stroke="#cacaca" stroke-width="0.25">1.00]</text><text x="114.44" y="359.90" font-size="9.84" textLength="9.84" lengthAdjust="spacingAndGlyphs" fill="#cacaca" class="j">−</text><text transform="translate(124.28 360.30) scale(0.81 1)" x="1.58" y="0" font-size="10.5" fill="#cacaca" stroke="#cacaca" stroke-width="0.25">[</text><text x="129.20" y="359.90" font-size="9.84" textLength="19.68" lengthAdjust="spacingAndGlyphs" fill="#cacaca" class="j">白金</text><text transform="translate(148.88 360.30) scale(0.81 1)" x="1.58 6.19 12.27 19.80 24.41 30.49 38.02 42.64 50.17 54.78 60.86 66.93" y="0" font-size="10.5" fill="#cacaca" stroke="#cacaca" stroke-width="0.25"> 24/10 4,195</text><text x="208.22" y="362.00" font-size="15.4" fill="#cacaca" class="j">×</text><text transform="translate(217.76 360.30) scale(0.81 1)" x="0.12 7.65 12.27 18.34 25.87 31.95" y="0" font-size="10.5" fill="#cacaca" stroke="#cacaca" stroke-width="0.25">1.00] </text><text x="247.28" y="359.90" font-size="9.84" textLength="19.68" lengthAdjust="spacingAndGlyphs" fill="#cacaca" class="j">終値</text><text transform="translate(266.96 360.30) scale(0.81 1)" x="1.58" y="0" font-size="10.5" fill="#cacaca" stroke="#cacaca" stroke-width="0.25"> </text><text x="271.88" y="359.90" font-size="9.84" textLength="19.68" lengthAdjust="spacingAndGlyphs" fill="#cacaca" class="j">時刻</text><text transform="translate(291.56 360.30) scale(0.81 1)" x="1.58 6.19 12.27 19.80 24.41 30.49 38.02 42.64 50.17 54.78 60.86 66.93" y="0" font-size="10.5" fill="#cacaca" stroke="#cacaca" stroke-width="0.25">:06:00 5,406</text>
</g>
<g filter="url(#bt)">
<text x="23.60" y="14.0" font-size="10.0" textLength="9.8" lengthAdjust="spacingAndGlyphs" fill="#000" class="u">金</text><text x="34.60" y="14.0" font-size="10.8" textLength="4.0" lengthAdjust="spacingAndGlyphs" fill="#000">1</text><text x="38.50" y="14.0" font-size="10.0" textLength="19.3" lengthAdjust="spacingAndGlyphs" fill="#000" class="u">分足</text><text x="58.00" y="14.0" font-size="10.8" textLength="39.4" lengthAdjust="spacingAndGlyphs" fill="#000">[2024/10]</text><text x="98.40" y="14.0" font-size="10.8" textLength="14.7" lengthAdjust="spacingAndGlyphs" fill="#000">1.00</text>
<text x="115.6" y="13.6" font-size="9.8" textLength="5" lengthAdjust="spacingAndGlyphs" fill="#000">-</text>
<text x="124.6" y="14.0" font-size="9.8" textLength="9.8" lengthAdjust="spacingAndGlyphs" fill="#000" class="u">白</text>
<text x="133.70" y="14.0" font-size="10.0" textLength="9.8" lengthAdjust="spacingAndGlyphs" fill="#000" class="u">金</text><text x="144.70" y="14.0" font-size="10.8" textLength="4.0" lengthAdjust="spacingAndGlyphs" fill="#000">1</text><text x="148.60" y="14.0" font-size="10.0" textLength="19.3" lengthAdjust="spacingAndGlyphs" fill="#000" class="u">分足</text><text x="168.10" y="14.0" font-size="10.8" textLength="39.4" lengthAdjust="spacingAndGlyphs" fill="#000">[2024/10]</text><text x="208.50" y="14.0" font-size="10.8" textLength="14.7" lengthAdjust="spacingAndGlyphs" fill="#000">1.00</text>
</g>
<text x="8.4" y="33.0" font-size="9.8" textLength="9.80" lengthAdjust="spacingAndGlyphs" fill="#1e1e1e" class="u">金</text>
<text x="27.2" y="32.4" font-size="9.7" textLength="31.6" lengthAdjust="spacingAndGlyphs" fill="#1e1e1e">2024/10</text>
<rect x="64.4" y="21.8" width="39.39999999999999" height="13.4" fill="#fff" stroke="#e4e6ea" stroke-width="0.6"/>
<text x="66.9" y="30.8" font-size="10.4" textLength="15.0" lengthAdjust="spacingAndGlyphs" fill="#111">1.00</text>
<rect x="91.9" y="22.5" width="10.899999999999991" height="11.6" rx="0.8" fill="#e3e3e3" stroke="#cfcfcf" stroke-width="0.5"/>
<path d="M95.25 27L97.35 24.4L99.44999999999999 27ZM95.25 29.2L97.35 31.8L99.44999999999999 29.2Z" fill="#222"/>
<rect x="106.2" y="24.4" width="1" height="9.6" fill="#bcc0c9"/><rect x="107.2" y="24.4" width="1.2" height="9.6" fill="#eef0f4"/>
<text x="113.6" y="33.0" font-size="9.4" textLength="18.80" lengthAdjust="spacingAndGlyphs" fill="#1e1e1e" class="u">白金</text>
<text x="141.2" y="32.4" font-size="9.7" textLength="31.7" lengthAdjust="spacingAndGlyphs" fill="#1e1e1e">2024/10</text>
<rect x="178.5" y="21.8" width="39.0" height="13.4" fill="#fff" stroke="#e4e6ea" stroke-width="0.6"/>
<text x="181.2" y="30.8" font-size="10.4" textLength="14.6" lengthAdjust="spacingAndGlyphs" fill="#111">1.00</text>
<rect x="206" y="22.5" width="10.900000000000006" height="11.6" rx="0.8" fill="#e3e3e3" stroke="#cfcfcf" stroke-width="0.5"/>
<path d="M209.35 27L211.45 24.4L213.54999999999998 27ZM209.35 29.2L211.45 31.8L213.54999999999998 29.2Z" fill="#222"/>
<rect x="220.3" y="24.4" width="1" height="9.6" fill="#bcc0c9"/><rect x="221.3" y="24.4" width="1.2" height="9.6" fill="#eef0f4"/>
<text x="227.2" y="33.0" font-size="9.4" textLength="18.80" lengthAdjust="spacingAndGlyphs" fill="#1e1e1e" class="u">分足</text>
<path d="M250.5 27L255.10000000000002 27L252.8 29.9Z" fill="#111"/>
<rect x="258.8" y="21.8" width="36.19999999999999" height="13.4" fill="#fff" stroke="#e4e6ea" stroke-width="0.6"/>
<text x="260.5" y="30.8" font-size="10.4" textLength="18.2" lengthAdjust="spacingAndGlyphs" fill="#111">1200</text>
<rect x="283.8" y="22.5" width="9.699999999999989" height="11.6" rx="0.8" fill="#e3e3e3" stroke="#cfcfcf" stroke-width="0.5"/>
<path d="M286.54999999999995 27L288.65 24.4L290.75 27ZM286.54999999999995 29.2L288.65 31.8L290.75 29.2Z" fill="#222"/>
<text x="300.2" y="32.4" font-size="9.7" textLength="4.0" lengthAdjust="spacingAndGlyphs" fill="#1e1e1e">1</text>
<text x="304.3" y="33.0" font-size="9.2" textLength="18.40" lengthAdjust="spacingAndGlyphs" fill="#1e1e1e" class="u">分足</text>
<path d="M327.7 27L332.3 27L330 29.9Z" fill="#111"/>
<rect x="337.2" y="24.4" width="1" height="9.6" fill="#bcc0c9"/><rect x="338.2" y="24.4" width="1.2" height="9.6" fill="#eef0f4"/>
<rect x="341" y="21.1" width="13.2" height="13.5" fill="#dcdee2"/>
<path d="M341 34.6V21.1H354.2" fill="none" stroke="#74777d" stroke-width="1.2"/>
<path d="M341.6 34.3H353.9V21.8" fill="none" stroke="#f4f5f7" stroke-width="0.9"/>
<path d="M345.3 22.2V33.8M342 26H353.6" stroke="#8a86d2" stroke-width="1.3" fill="none"/>
<path d="M347.2 28.2H351.2L349.9 29.5L352.6 32.2L351.3 33.4L348.6 30.7L347.2 32.1Z" fill="#a21fc4"/>
<rect x="360.09999999999997" y="24.4" width="1" height="9.6" fill="#bcc0c9"/><rect x="361.09999999999997" y="24.4" width="1.2" height="9.6" fill="#eef0f4"/>
<rect x="364.2" y="21.1" width="13.1" height="13.5" fill="#a9adb1"/>
<path d="M364.2 34.6V21.1H377.3" fill="none" stroke="#6f7278" stroke-width="1.2"/>
<path d="M364.8 34.3H377V21.8" fill="none" stroke="#e6e8ec" stroke-width="0.9"/>
<path d="M366.5 23.9L366.9 31.2L369.1 29.4L371.9 33L374 31.6L371.4 28.1L374.3 27.3Z" fill="#f4f2ff" stroke="#6a4fd0" stroke-width="1.3" stroke-linejoin="round"/>
<path d="M385.3 33.4C384.6 31.6 383.2 29.9 383.2 28.4C383.2 27.3 384.5 27.2 385.2 28.3L385.5 28.8L385.4 24.6C385.4 23.6 386.8 23.5 387 24.5L387.2 23.1C387.4 22.1 388.9 22.1 389 23.1L389.2 23.9C389.5 23 390.8 23.1 390.9 24.1L391.1 25.3C391.6 24.5 392.8 24.8 392.9 25.9C393.2 28 393.3 30.8 392.2 33.4Z" fill="#fff6e6" stroke="#e0a03c" stroke-width="1.2" stroke-linejoin="round"/>
<path d="M401.4 33.3L402.6 29.9L410.3 22.8C411.6 21.8 413.6 23.6 412.6 25L404.9 32.1Z" fill="#f3b64c" stroke="#e09a2c" stroke-width="0.8" stroke-linejoin="round"/>
<path d="M403.6 30.8L411.2 23.8" stroke="#ffe9b8" stroke-width="1.1" fill="none"/>
<path d="M401.4 33.3L402.1 31.3L403.4 32.6Z" fill="#8a5a16"/>
<path d="M425.6 28.4L428.4 25.8L431.3 28.7L428.5 31.6Z" fill="#2352a8"/>
<path d="M419.5 33.3L420.9 29.7L428.3 22.9C429.7 21.9 431.7 23.7 430.7 25.1L423.2 32Z" fill="#4a8cea" stroke="#2f6fd6" stroke-width="0.8" stroke-linejoin="round"/>
<path d="M422 30.5L429.2 23.9" stroke="#cfe2ff" stroke-width="1.1" fill="none"/>
<rect x="438.5" y="24.4" width="1" height="9.6" fill="#bcc0c9"/><rect x="439.5" y="24.4" width="1.2" height="9.6" fill="#eef0f4"/>
<rect x="443.4" y="23.3" width="11.2" height="10" fill="#e9eaec"/>
<path d="M443.79999999999995 23.3V33H454.59999999999997" fill="none" stroke="#9b9da2" stroke-width="0.9"/>
<path d="M445.59999999999997 33V29.2M448.0 33V24.2M450.4 33V25.6M452.9 33V28.8" stroke="#2e8ff0" stroke-width="1.7" fill="none"/>
<path d="M456.7 27L461.3 27L459 29.9Z" fill="#111"/>
<rect x="465.9" y="23.3" width="11.2" height="10" fill="#e9eaec"/>
<path d="M466.29999999999995 23.3V33H477.09999999999997" fill="none" stroke="#9b9da2" stroke-width="0.9"/>
<path d="M468.09999999999997 33V29.2M470.5 33V24.2M472.9 33V25.6M475.4 33V28.8" stroke="#2e8ff0" stroke-width="1.7" fill="none"/>
<path d="M467.3 24L476 32.2M476 24L467.3 32.2" stroke="#f03a4e" stroke-width="1.3" fill="none" stroke-linecap="round"/>
<rect x="484.9" y="24.4" width="1" height="9.6" fill="#bcc0c9"/><rect x="485.9" y="24.4" width="1.2" height="9.6" fill="#eef0f4"/>
<path d="M494.6 23.9A4.4 4.4 0 1 0 497.3 30.3" fill="none" stroke="#2490e8" stroke-width="1.7"/>
<path d="M491.4 22.4H495.9V26.4Z" fill="#2458f4"/>
<text x="494.9" y="30.3" font-size="6.6" font-weight="bold" fill="#2272e2" textLength="4.6" lengthAdjust="spacingAndGlyphs">R</text>
<path d="M1002.3 33.2L1007.6 28.4" stroke="#5f5cff" stroke-width="2.5" stroke-linecap="round" fill="none"/>
<path d="M1009.3 23.3A3.4 3.4 0 1 0 1012.9 26.6L1010.6 28L1008.4 26.6L1008.6 24.2Z" fill="#b4aef0" stroke="#8a84e6" stroke-width="0.7" stroke-linejoin="round"/>
<path d="M1006.6 27.6L1008.2 24.6" stroke="#f4f2ff" stroke-width="1" fill="none"/>
<path d="M8.3 4.8V15.6H19" fill="none" stroke="#8f9398" stroke-width="0.9"/>
<path d="M10.8 14.2V10.2M14.4 11.6V6.2M18 12.4V7.4" stroke="#f0141e" stroke-width="1.4" fill="none" stroke-linecap="round"/>
<path d="M12.6 13.4V6.8M16.2 12.2V7.6" stroke="#1a7ae4" stroke-width="1.3" fill="none" stroke-linecap="round"/>
<rect x="956.6" y="5.1" width="8.2" height="10.3" fill="#e4e4e4" stroke="#a9a9a9" stroke-width="0.9"/>
<rect x="959.5" y="7.4" width="7.7" height="5.9" rx="0.8" fill="#dedede" stroke="#636363" stroke-width="1.1"/>
<rect x="974.2" y="3.3" width="13.4" height="14" rx="2.2" fill="url(#bg1)" stroke="#aaaaaa" stroke-width="0.9"/>
<rect x="990.1" y="3.3" width="13.4" height="14" rx="2.2" fill="url(#bg1)" stroke="#aaaaaa" stroke-width="0.9"/>
<rect x="1006.0" y="3.3" width="13.4" height="14" rx="2.2" fill="url(#bg1)" stroke="#aaaaaa" stroke-width="0.9"/>
<rect x="977.8" y="11.9" width="5.1" height="1.8" fill="#505050"/>
<path d="M994.4 8.1H999.5V13H994.4Z" fill="none" stroke="#555" stroke-width="1.05"/><rect x="993.9" y="7.2" width="6.1" height="1.5" fill="#555"/>
<path d="M1009.8 7.4L1016 13.6M1016 7.4L1009.8 13.6" stroke="#505050" stroke-width="1.35" fill="none"/>
</svg>
</body></html>
